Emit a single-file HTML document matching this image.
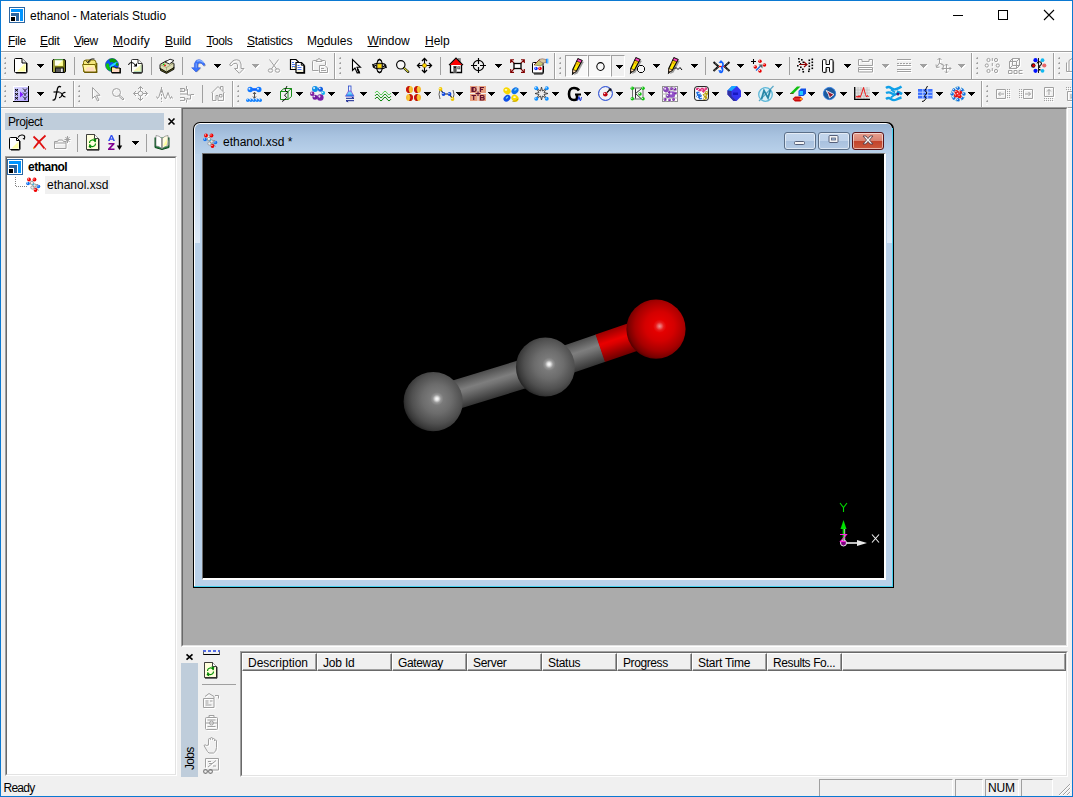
<!DOCTYPE html>
<html>
<head>
<meta charset="utf-8">
<title>ethanol - Materials Studio</title>
<style>
*{box-sizing:border-box;margin:0;padding:0}
html,body{width:1073px;height:797px;overflow:hidden;background:#f0f0f0}
body{position:relative;font-family:"Liberation Sans",sans-serif;font-size:12px;color:#000;line-height:1}
.a{position:absolute}
.t{position:absolute;white-space:nowrap;line-height:14px;height:14px}
.t u{text-decoration:underline;text-decoration-thickness:1px;text-underline-offset:1px;text-decoration-skip-ink:none}
svg{position:absolute;overflow:visible}
.sep{position:absolute;width:1px;background:#a0a0a0}
.band{position:absolute;width:2px;height:26px;border-left:1px solid #a0a0a0;border-right:1px solid #fff}
.dd{position:absolute;width:0;height:0;border-left:3.5px solid transparent;border-right:3.5px solid transparent;border-top:4px solid #000}
.dd.g{border-top-color:#a0a0a0}
.dd.w{border-top-color:#fff}
.chk{position:absolute;background:#f8f8f8;border-top:1px solid #a0a0a0;border-left:1px solid #a0a0a0;border-right:1px solid #fff;border-bottom:1px solid #fff}
.chk2{position:absolute;background:#f0f0f0;border-top:1px solid #a0a0a0;border-left:1px solid #a0a0a0;border-right:1px solid #fff;border-bottom:1px solid #fff}
.hd{position:absolute;background:#f0f0f0;border-top:1px solid #fff;border-left:1px solid #fff;border-right:1px solid #696969;border-bottom:1px solid #696969;box-shadow:inset -1px -1px 0 #a0a0a0}
.hd span{position:absolute;left:5px;top:2px;line-height:14px;white-space:nowrap}
.cb{position:absolute;top:132px;width:32px;height:18px;border-radius:3px;border:1px solid #5b6f88;box-shadow:inset 0 0 0 1px rgba(255,255,255,.55)}
</style>
</head>
<body>
<!-- window frame -->
<div class="a" style="left:0;top:0;width:1073px;height:797px;border:1px solid #0b79d2"></div>

<!-- title bar + menu background -->
<div class="a" style="left:1px;top:1px;width:1071px;height:50px;background:#fff"></div>
<svg style="left:9px;top:7px" width="16" height="16" viewBox="0 0 16 16" shape-rendering="crispEdges">
<rect x="0.5" y="0.5" width="15" height="15" fill="#fff" stroke="#2c65a0"/>
<path d="M2 2h12v12h-3v-9h-9z" fill="#0094ff"/>
<path d="M2 6h8v8h-3v-5h-5z" fill="#2c65a0"/>
<rect x="2" y="10" width="4" height="4" fill="#000"/>
</svg>
<div class="t" style="left:30px;top:9px">ethanol - Materials Studio</div>
<!-- caption buttons -->
<svg style="left:953px;top:10px" width="110" height="12" viewBox="0 0 110 12">
<path d="M0 5.5h10" stroke="#000" stroke-width="1" fill="none" shape-rendering="crispEdges"/>
<rect x="45.5" y="0.5" width="9" height="9" stroke="#000" fill="none" shape-rendering="crispEdges"/>
<path d="M91 0l10 10M101 0l-10 10" stroke="#000" stroke-width="1.1" fill="none"/>
</svg>

<!-- menu bar -->
<div id="menu">
<div class="t" style="left:8px;top:34px;letter-spacing:-.4px"><u>F</u>ile</div>
<div class="t" style="left:40px;top:34px;letter-spacing:-.3px"><u>E</u>dit</div>
<div class="t" style="left:74px;top:34px;letter-spacing:-.55px"><u>V</u>iew</div>
<div class="t" style="left:113px;top:34px;letter-spacing:.3px"><u>M</u>odify</div>
<div class="t" style="left:165px;top:34px;letter-spacing:-.1px"><u>B</u>uild</div>
<div class="t" style="left:206.5px;top:34px;letter-spacing:-.45px"><u>T</u>ools</div>
<div class="t" style="left:247px;top:34px;letter-spacing:-.25px"><u>S</u>tatistics</div>
<div class="t" style="left:307px;top:34px">M<u>o</u>dules</div>
<div class="t" style="left:367.5px;top:34px;letter-spacing:-.1px"><u>W</u>indow</div>
<div class="t" style="left:425px;top:34px"><u>H</u>elp</div>
</div>

<!-- toolbar area lines -->
<div class="a" style="left:1px;top:51px;width:1071px;height:1px;background:#a0a0a0"></div>
<div class="a" style="left:1px;top:52px;width:1071px;height:1px;background:#fff"></div>
<div class="a" style="left:1px;top:79px;width:1071px;height:1px;background:#a0a0a0"></div>
<div class="a" style="left:1px;top:80px;width:1071px;height:1px;background:#fff"></div>
<div class="a" style="left:1px;top:107px;width:1071px;height:1px;background:#a0a0a0"></div>
<div class="a" style="left:1px;top:108px;width:1071px;height:1px;background:#fff"></div>

<div id="tb1">
<svg style="left:4px;top:57px" width="3" height="22" viewBox="0 0 3 22" shape-rendering="crispEdges"><rect x="1" y="0" width="1" height="1" fill="#b2b2b2"/><rect x="0" y="1" width="1" height="1" fill="#b2b2b2"/><rect x="1" y="1" width="1" height="1" fill="#9c9c9c"/><rect x="0" y="0" width="1" height="1" fill="#e2e2e2"/><rect x="1" y="5" width="1" height="1" fill="#b2b2b2"/><rect x="0" y="6" width="1" height="1" fill="#b2b2b2"/><rect x="1" y="6" width="1" height="1" fill="#9c9c9c"/><rect x="0" y="5" width="1" height="1" fill="#e2e2e2"/><rect x="1" y="10" width="1" height="1" fill="#b2b2b2"/><rect x="0" y="11" width="1" height="1" fill="#b2b2b2"/><rect x="1" y="11" width="1" height="1" fill="#9c9c9c"/><rect x="0" y="10" width="1" height="1" fill="#e2e2e2"/><rect x="1" y="15" width="1" height="1" fill="#b2b2b2"/><rect x="0" y="16" width="1" height="1" fill="#b2b2b2"/><rect x="1" y="16" width="1" height="1" fill="#9c9c9c"/><rect x="0" y="15" width="1" height="1" fill="#e2e2e2"/><rect x="0" y="19" width="2" height="1" fill="#fafafa"/></svg>
<svg style="left:14px;top:58px" width="14" height="15" viewBox="0 0 14 15"><path d="M1.5 .5h6.5l4.5 4.5v8.5q0 1-1 1h-10q-1 0-1-1v-12q0-1 1-1z" fill="#fff" stroke="#000"/><path d="M3 13.5l8.5-8.5v8.5z" fill="#ffff8c" opacity=".75"/><path d="M8 .5v4.5h4.5" fill="#e8e8e8" stroke="#000"/><path d="M13 5v9q0 1-1 1h-10" fill="none" stroke="#000" stroke-width="1"/></svg>
<svg style="left:37px;top:64px" width="7" height="4" viewBox="0 0 7 4" shape-rendering="crispEdges"><path d="M0 0h7v1h-1v1h-1v1h-1v1h-1v-1h-1v-1h-1v-1h-1z" fill="#000"/></svg>
<svg style="left:52px;top:59px" width="14" height="14" viewBox="0 0 14 14"><rect x=".5" y=".5" width="13" height="13" rx="1.5" fill="#77771a" stroke="#000"/><rect x="1.5" y="1" width="1" height="12" fill="#c8c864"/><rect x="2.5" y=".5" width="8.5" height="6.5" fill="#fffff0" stroke="#8c8c28" stroke-width=".6"/><path d="M5 7l6-6v6z" fill="#ffff80" opacity=".8"/><rect x="2.5" y=".2" width="8.5" height="1" fill="#4aa04a"/><rect x="3" y="8.5" width="9" height="5" fill="#111"/><rect x="4" y="9.5" width="5" height="3.5" fill="#5a5a5a"/><rect x="9" y="9.5" width="1.8" height="3.5" fill="#e8e8e8"/></svg>
<div class="sep" style="left:74px;top:57px;height:18px"></div>
<svg style="left:82px;top:58px" width="16" height="15" viewBox="0 0 16 15"><path d="M1.5 4.5q0-2.5 2.5-2.5h7.5q2.5 0 2.5 2.5v9h-12.5z" fill="#f4e67c" stroke="#786800" stroke-width="1"/><path d="M.6 6.5h12.4l1.8 7.5h-12.6z" fill="#fff6a4" stroke="#786800" stroke-width="1"/><path d="M3 13.5l2-4.5h6.5l1.5 4.5z" fill="#ffd4c8" opacity=".75"/><path d="M14.7 5v9.3h-12.5" fill="none" stroke="#6a5a00" stroke-width="1.3"/><path d="M6.2 4q1.8-3.8 6.3-3" fill="none" stroke="#000" stroke-width=".85"/><path d="M4 2.5l2.2 2.6 2.5-2.4" fill="none" stroke="#000" stroke-width=".9"/></svg>
<svg style="left:105px;top:58px" width="16" height="15" viewBox="0 0 16 15"><circle cx="7" cy="7" r="6.5" fill="#0a50ff" stroke="#10308c" stroke-width=".6"/><path d="M4 1.5q3-1.8 6-.5l2 2.5-3 1.5-2-1-2 .5z" fill="#0c9a0c"/><path d="M1 6q2-1.5 3 0l.5 3 2 2-1 2q-3-.5-4.5-4z" fill="#10c010"/><path d="M4.5 8.5q3.5-4 8-4.5l.5 1.5q-4 1-7 5z" fill="#20d8ff"/><path d="M12 4l1.5 2.5-1.5 2-1.5-2z" fill="#0c9a0c"/><path d="M6.5 9h3l1 1h4.5v4.5h-8.5z" fill="#fff08c" stroke="#000" stroke-width=".9"/><path d="M7.5 14l1-3h6l-.5 3z" fill="#ffd8c8"/><path d="M15.3 10v4.8h-8.5" fill="none" stroke="#000" stroke-width="1.2"/></svg>
<svg style="left:128px;top:59px" width="15" height="14" viewBox="0 0 15 14"><path d="M4.5 .5h5.5l4 4v8q0 1-1 1h-8.5q-1 0-1-1v-11q0-1 1-1z" fill="#fff" stroke="#202020" stroke-width=".9"/><path d="M5 12.5l8.5-7.5v7.5z" fill="#f4f4a0" opacity=".8"/><path d="M13 6v6.5h-7" stroke="#b8e0c0" fill="none"/><path d="M10 .5v4h4" fill="#f4f4f4" stroke="#202020" stroke-width=".9"/><path d="M14.3 5.5v7.5q0 1.3-1.3 1.3h-8" fill="none" stroke="#000" stroke-width=".8"/><path d="M.5 6q.5-2.5 3-2.5 2.5 0 4 3" fill="none" stroke="#000" stroke-width="1"/><path d="M5.5 7.5h3.5v-3.5z" fill="#000"/></svg>
<div class="sep" style="left:151px;top:57px;height:18px"></div>
<svg style="left:159px;top:59px" width="16" height="14" viewBox="0 0 16 14"><path d="M1 5.5l6-3.5 8 2.5v4.5l-7.5 4.5-6.5-3.5z" fill="#dcdcb4" stroke="#000" stroke-width=".9"/><path d="M1 5.5l6.5 3 7.5-4.5" fill="none" stroke="#8c8c5c" stroke-width=".6"/><path d="M7.5 8.5v5" stroke="#8c8c5c" stroke-width=".6"/><path d="M6 3l5-2.8 4 1.3-4.5 3.5z" fill="#fff" stroke="#000" stroke-width=".8"/><path d="M1.5 9.5l6 3.5 7.5-4.5v1.8l-7.5 4.2-6-3z" fill="#5a5a1e" stroke="#000" stroke-width=".8"/><circle cx="4.8" cy="5.3" r=".9" fill="#00d000"/><circle cx="6" cy="6.3" r=".9" fill="#f00000"/></svg>
<div class="sep" style="left:182px;top:57px;height:18px"></div>
<svg style="left:190px;top:58px" width="16" height="15" viewBox="0 0 16 15"><g transform="translate(1.2,1) scale(.92)"><path d="M6.5 2.5q5.5-2.5 9.5 4.5l-1.5 1.5q-2-4-5.5-3.5l-1 1.5v3.5h3l-4.8 4.8-4.7-4.8h3v-4.5z" fill="#989898" opacity=".8"/><path d="M5.5 1.5q5.5-2.8 9.5 4.5l-1.5 1.3q-2-3.8-5.5-3l-1 1.7v3.5h3l-4.8 4.5-4.7-4.5h3v-4.5z" fill="#3a74ff" stroke="#2450d8" stroke-width=".6"/><path d="M6 2.5q4-2 7.5 1.5" fill="none" stroke="#8cb8ff" stroke-width="1.3"/><path d="M5.5 4.5v5" stroke="#78a4ff" stroke-width="1.2"/></g></svg>
<svg style="left:214px;top:64px" width="7" height="4" viewBox="0 0 7 4" shape-rendering="crispEdges"><path d="M0 0h7v1h-1v1h-1v1h-1v1h-1v-1h-1v-1h-1v-1h-1z" fill="#000"/></svg>
<svg style="left:229px;top:59px" width="16" height="15" viewBox="0 0 16 15"><g transform="translate(1,1)" stroke="#fff" fill="none"><path d="M10.5 1.5q-6-2.8-10 4.5l1.5 1q2.5-3.5 5.5-2.7l1 1.7v3.5h-3l4.8 4.8 4.7-4.8h-3v-4.5z"/></g><g stroke="#a0a0a0" fill="none"><path d="M10.5 1.5q-6-2.8-10 4.5l1.5 1q2.5-3.5 5.5-2.7l1 1.7v3.5h-3l4.8 4.8 4.7-4.8h-3v-4.5z"/></g></svg>
<svg style="left:252px;top:64px" width="8" height="5" viewBox="0 0 8 5" shape-rendering="crispEdges"><path d="M0 0h7v1h-1v1h-1v1h-1v1h-1v-1h-1v-1h-1v-1h-1z" fill="#fff" transform="translate(1,1)"/><path d="M0 0h7v1h-1v1h-1v1h-1v1h-1v-1h-1v-1h-1v-1h-1z" fill="#a0a0a0"/></svg>
<svg style="left:268px;top:59px" width="13" height="15" viewBox="0 0 13 15"><g transform="translate(1,1)" stroke="#fff" fill="none"><path d="M1.5 .5l7.5 10M10.5 .5l-7.5 10"/><ellipse cx="2.5" cy="11.5" rx="2.2" ry="1.8"/><ellipse cx="9.5" cy="11.5" rx="2.2" ry="1.8"/></g><g stroke="#a0a0a0" fill="none"><path d="M1.5 .5l7.5 10M10.5 .5l-7.5 10"/><ellipse cx="2.5" cy="11.5" rx="2.2" ry="1.8"/><ellipse cx="9.5" cy="11.5" rx="2.2" ry="1.8"/></g></svg>
<svg style="left:290px;top:59px" width="15" height="14" viewBox="0 0 15 14"><path d="M.5 .5h5.5l2.5 2.5v7.5h-8z" fill="#fff" stroke="#000" stroke-width="1.2"/><path d="M2 3.5h2M2 5.5h3M2 7.5h3" stroke="#4878f0" stroke-width="1"/><path d="M2 8.8h4" stroke="#c0b040" stroke-width=".8" stroke-dasharray="1 1"/><path d="M6 3.5h5.5l2.5 2.5v7.5h-8z" fill="#fff" stroke="#000" stroke-width="1.2"/><path d="M11.3 3.5v2.7h2.7" fill="none" stroke="#000" stroke-width="1"/><path d="M7.5 6.5h2M7.5 8.5h4M7.5 10.5h4" stroke="#4878f0" stroke-width="1"/><path d="M7.5 12h5" stroke="#c0b040" stroke-width=".8" stroke-dasharray="1 1"/><path d="M14.5 6.5v7.5h-8" fill="none" stroke="#000" stroke-width="1.3"/></svg>
<svg style="left:312px;top:58px" width="17" height="16" viewBox="0 0 17 16"><g transform="translate(1,1)" stroke="#fff" fill="none"><path d="M4.5 2.5h-3q-1 0-1 1v9h6"/><path d="M9.5 2.5h3q1 0 1 1v3.5"/><path d="M4 3.5v-1.5h1.5q.5-1.5 1.5-1.5t1.5 1.5h1.5v1.5z"/><path d="M7.5 7.5h5.5l2.5 2.5v4.5h-8z"/><path d="M9 10.5h3M9 12.5h5"/></g><g stroke="#a0a0a0" fill="none"><path d="M4.5 2.5h-3q-1 0-1 1v9h6"/><path d="M9.5 2.5h3q1 0 1 1v3.5"/><path d="M4 3.5v-1.5h1.5q.5-1.5 1.5-1.5t1.5 1.5h1.5v1.5z"/><path d="M7.5 7.5h5.5l2.5 2.5v4.5h-8z"/><path d="M9 10.5h3M9 12.5h5"/></g></svg>
<div class="band" style="left:334px;top:53px"></div>
<svg style="left:339px;top:57px" width="3" height="22" viewBox="0 0 3 22" shape-rendering="crispEdges"><rect x="1" y="0" width="1" height="1" fill="#b2b2b2"/><rect x="0" y="1" width="1" height="1" fill="#b2b2b2"/><rect x="1" y="1" width="1" height="1" fill="#9c9c9c"/><rect x="0" y="0" width="1" height="1" fill="#e2e2e2"/><rect x="1" y="5" width="1" height="1" fill="#b2b2b2"/><rect x="0" y="6" width="1" height="1" fill="#b2b2b2"/><rect x="1" y="6" width="1" height="1" fill="#9c9c9c"/><rect x="0" y="5" width="1" height="1" fill="#e2e2e2"/><rect x="1" y="10" width="1" height="1" fill="#b2b2b2"/><rect x="0" y="11" width="1" height="1" fill="#b2b2b2"/><rect x="1" y="11" width="1" height="1" fill="#9c9c9c"/><rect x="0" y="10" width="1" height="1" fill="#e2e2e2"/><rect x="1" y="15" width="1" height="1" fill="#b2b2b2"/><rect x="0" y="16" width="1" height="1" fill="#b2b2b2"/><rect x="1" y="16" width="1" height="1" fill="#9c9c9c"/><rect x="0" y="15" width="1" height="1" fill="#e2e2e2"/><rect x="0" y="19" width="2" height="1" fill="#fafafa"/></svg>
<svg style="left:352px;top:59px" width="10" height="15" viewBox="0 0 10 15"><path d="M.5 .5v11l2.5-2.5 2.2 5 2-.8-2.2-4.9h3.5z" fill="#fff" stroke="#000" stroke-width="1.1"/><path d="M5.5 10l2 4.5" stroke="#000" stroke-width="1.8"/></svg>
<svg style="left:372px;top:59px" width="15" height="14" viewBox="0 0 15 14"><ellipse cx="7.5" cy="7" rx="6.5" ry="2.8" fill="none" stroke="#000" stroke-width="1.1"/><ellipse cx="7.5" cy="7" rx="2.8" ry="6.3" fill="none" stroke="#000" stroke-width="1.1"/><path d="M.5 5l1.5 2.5 2-1.5M14.5 9l-1.5-2.5-2 1.5M5.5 1.5l2-1.2 2 1.5M9.5 12.5l-2 1.2-2-1.5" fill="none" stroke="#000" stroke-width="1.2"/><rect x="5.5" y="5" width="4" height="4" fill="#ffe000" stroke="#806000" stroke-width=".5"/></svg>
<svg style="left:396px;top:60px" width="13" height="13" viewBox="0 0 13 13"><circle cx="4.8" cy="4.8" r="4.2" fill="#f8f8f8" stroke="#000" stroke-width="1.15"/><path d="M8 8l4.2 3.8" stroke="#000" stroke-width="2.3" stroke-linecap="round"/><path d="M8.2 8.2l3.8 3.4" stroke="#f0f040" stroke-width="1.1" stroke-linecap="round"/></svg>
<svg style="left:417px;top:58px" width="15" height="15" viewBox="0 0 15 15"><path d="M7.5 .5v14M.5 7.5h14" stroke="#000" stroke-width="1.1"/><path d="M5 3l2.5-2.5 2.5 2.5M5 12l2.5 2.5 2.5-2.5M3 5l-2.5 2.5 2.5 2.5M12 5l2.5 2.5-2.5 2.5" stroke="#000" stroke-width="1.3" fill="none"/><circle cx="7.5" cy="7.5" r="2.1" fill="#ffd800" stroke="#705000" stroke-width=".6"/></svg>
<div class="sep" style="left:440px;top:57px;height:18px"></div>
<svg style="left:449px;top:58px" width="14" height="15" viewBox="0 0 14 15"><rect x="9" y=".5" width="2.5" height="4" fill="#909090" stroke="#707070" stroke-width=".5"/><path d="M1.5 7h11v7.5h-11z" fill="#fff"/><path d="M.5 7l6.5-6.5 6.5 6.5z" fill="#f00" /><path d="M0 7.2l7-7 7 7" fill="none" stroke="#000" stroke-width="1.2"/><path d="M1.5 7v7.5h3.5v-5.5h2v5.5h5.5v-7.5" fill="none" stroke="#000" stroke-width="1.3"/><path d="M4.5 9v5.5M7.5 9v5.5" stroke="#909090" stroke-width="1"/><rect x="8.8" y="8.8" width="2" height="2" fill="#ddd" stroke="#555" stroke-width=".9"/></svg>
<svg style="left:471px;top:58px" width="15" height="15" viewBox="0 0 15 15"><circle cx="7.5" cy="7.5" r="5.2" fill="none" stroke="#000" stroke-width="1.15"/><path d="M7.5 0v6M7.5 9v6M0 7.5h6M9 7.5h6" stroke="#000" stroke-width="1.15"/></svg>
<svg style="left:495px;top:64px" width="7" height="4" viewBox="0 0 7 4" shape-rendering="crispEdges"><path d="M0 0h7v1h-1v1h-1v1h-1v1h-1v-1h-1v-1h-1v-1h-1z" fill="#000"/></svg>
<svg style="left:510px;top:59px" width="15" height="14" viewBox="0 0 15 14"><path d="M.7 4v-3.3h3.3M.7 .7l3.6 3.6M14.3 4v-3.3h-3.3M14.3 .7l-3.6 3.6M.7 10v3.3h3.3M.7 13.3l3.6-3.6M14.3 10v3.3h-3.3M14.3 13.3l-3.6-3.6" fill="none" stroke="#800000" stroke-width="1.15"/><rect x="4" y="4.5" width="7" height="5" fill="#fff" stroke="#000" stroke-width="1.3"/></svg>
<svg style="left:532px;top:58px" width="17" height="16" viewBox="0 0 17 16"><path d="M1.5 4.5h9.5v9.5q0 1-1 1h-8.5q-1 0-1-1v-8.5q0-1 1-1z" fill="#fff" stroke="#000"/><path d="M11.5 8v6.5q0 1.5-1.5 1.5h-8" fill="none" stroke="#000"/><circle cx="4" cy="10.5" r="1.8" fill="#1030ff"/><circle cx="8" cy="10.5" r="1.8" fill="#f00010"/><circle cx="3.5" cy="10" r=".6" fill="#fff"/><circle cx="7.5" cy="10" r=".6" fill="#fff"/><path d="M2 7l5.5-5.5 4 3-2.5 3.5z" fill="#c8c870" stroke="#505020" stroke-width=".5"/><path d="M7 1.5q3-1.5 7 0v3q-3 1-5.5-.5z" fill="#d8c8a0" stroke="#806060" stroke-width=".6"/><rect x="14" y=".8" width="2.2" height="4.5" fill="#2080ff"/><rect x="15.2" y=".8" width="1" height="4.5" fill="#60d0ff"/><path d="M2 7l5.5-5.5" stroke="#802020" stroke-width=".8"/></svg>
<div class="band" style="left:554px;top:53px"></div>
<svg style="left:559px;top:57px" width="3" height="22" viewBox="0 0 3 22" shape-rendering="crispEdges"><rect x="1" y="0" width="1" height="1" fill="#b2b2b2"/><rect x="0" y="1" width="1" height="1" fill="#b2b2b2"/><rect x="1" y="1" width="1" height="1" fill="#9c9c9c"/><rect x="0" y="0" width="1" height="1" fill="#e2e2e2"/><rect x="1" y="5" width="1" height="1" fill="#b2b2b2"/><rect x="0" y="6" width="1" height="1" fill="#b2b2b2"/><rect x="1" y="6" width="1" height="1" fill="#9c9c9c"/><rect x="0" y="5" width="1" height="1" fill="#e2e2e2"/><rect x="1" y="10" width="1" height="1" fill="#b2b2b2"/><rect x="0" y="11" width="1" height="1" fill="#b2b2b2"/><rect x="1" y="11" width="1" height="1" fill="#9c9c9c"/><rect x="0" y="10" width="1" height="1" fill="#e2e2e2"/><rect x="1" y="15" width="1" height="1" fill="#b2b2b2"/><rect x="0" y="16" width="1" height="1" fill="#b2b2b2"/><rect x="1" y="16" width="1" height="1" fill="#9c9c9c"/><rect x="0" y="15" width="1" height="1" fill="#e2e2e2"/><rect x="0" y="19" width="2" height="1" fill="#fafafa"/></svg>
<div class="chk" style="left:565px;top:55px;width:23px;height:22px"></div>
<div class="chk" style="left:588px;top:55px;width:23px;height:22px"></div>
<div class="chk2" style="left:611px;top:55px;width:14px;height:22px"></div>
<svg style="left:572px;top:58px" width="12" height="17" viewBox="0 0 12 17"><g transform="translate(0,0)"><path d="M8 2l3.8 2-6.3 11.5-3.5 1.5z" fill="#909090" opacity=".9"/><path d="M6 .8l4 1.7-5.5 10.5-4 3 .3-4.5z" fill="#ffe800" stroke="#000" stroke-width="1.1"/><path d="M3.5 6.5l1-2 1 2.5 1-3" fill="none" stroke="#e09000" stroke-width=".8"/><path d="M6 .8l4 1.7-1.2 2.3-4-1.7z" fill="#ff48c0" stroke="#000" stroke-width=".6"/><path d="M.8 11.5l3.7 1.5-4 3z" fill="#ffd8b0" stroke="#000" stroke-width=".6"/><path d="M.5 15.5l.1-1.8 1.400.8z" fill="#000"/></g></svg>
<svg style="left:596px;top:62px" width="9" height="9" viewBox="0 0 9 9"><ellipse cx="4.5" cy="4.5" rx="3.7" ry="3.9" fill="none" stroke="#000" stroke-width="1.05"/></svg>
<svg style="left:616px;top:65px" width="7" height="4" viewBox="0 0 7 4" shape-rendering="crispEdges"><path d="M0 0h7v1h-1v1h-1v1h-1v1h-1v-1h-1v-1h-1v-1h-1z" fill="#000"/></svg>
<svg style="left:630px;top:57px" width="16" height="17" viewBox="0 0 16 17"><g transform="translate(0,0)"><path d="M8 2l3.8 2-6.3 11.5-3.5 1.5z" fill="#909090" opacity=".9"/><path d="M6 .8l4 1.7-5.5 10.5-4 3 .3-4.5z" fill="#ffe800" stroke="#000" stroke-width="1.1"/><path d="M3.5 6.5l1-2 1 2.5 1-3" fill="none" stroke="#e09000" stroke-width=".8"/><path d="M6 .8l4 1.7-1.2 2.3-4-1.7z" fill="#ff48c0" stroke="#000" stroke-width=".6"/><path d="M.8 11.5l3.7 1.5-4 3z" fill="#ffd8b0" stroke="#000" stroke-width=".6"/><path d="M.5 15.5l.1-1.8 1.400.8z" fill="#000"/></g><path d="M9.5 8.5h3l2 2v3l-2 2h-3l-2-2v-3z" fill="#f4f4f4" stroke="#000" stroke-width="1"/></svg>
<svg style="left:653px;top:64px" width="7" height="4" viewBox="0 0 7 4" shape-rendering="crispEdges"><path d="M0 0h7v1h-1v1h-1v1h-1v1h-1v-1h-1v-1h-1v-1h-1z" fill="#000"/></svg>
<svg style="left:668px;top:57px" width="16" height="17" viewBox="0 0 16 17"><g transform="translate(0,0)"><path d="M8 2l3.8 2-6.3 11.5-3.5 1.5z" fill="#909090" opacity=".9"/><path d="M6 .8l4 1.7-5.5 10.5-4 3 .3-4.5z" fill="#ffe800" stroke="#000" stroke-width="1.1"/><path d="M3.5 6.5l1-2 1 2.5 1-3" fill="none" stroke="#e09000" stroke-width=".8"/><path d="M6 .8l4 1.7-1.2 2.3-4-1.7z" fill="#ff48c0" stroke="#000" stroke-width=".6"/><path d="M.8 11.5l3.7 1.5-4 3z" fill="#ffd8b0" stroke="#000" stroke-width=".6"/><path d="M.5 15.5l.1-1.8 1.400.8z" fill="#000"/></g><path d="M6.5 12l1.5-1.5 2 2 2-2 2 2.5" fill="none" stroke="#000" stroke-width="1"/></svg>
<svg style="left:691px;top:64px" width="7" height="4" viewBox="0 0 7 4" shape-rendering="crispEdges"><path d="M0 0h7v1h-1v1h-1v1h-1v1h-1v-1h-1v-1h-1v-1h-1z" fill="#000"/></svg>
<div class="sep" style="left:705px;top:57px;height:18px"></div>
<svg style="left:713px;top:60px" width="17" height="13" viewBox="0 0 17 13"><path d="M.5 2l5 4.5-5 4.5M16.5 2l-5 4.5 5 4.5" fill="none" stroke="#000" stroke-width="1.9"/><path d="M.5 2l5 4.5-5 4.5M16.5 2l-5 4.5 5 4.5" fill="none" stroke="#fff" stroke-width=".6" stroke-dasharray="1 1"/><path d="M6 6.5h5.5" stroke="#f00" stroke-width="1.2"/><path d="M7 2.5q3-1 3 2t-2 3q2 .5 1.5 3t-3 1.5" fill="none" stroke="#1060ff" stroke-width="1.7"/><path d="M5.5 3l2.5-3 2 2.5zM5 10.5l2.5 2.5 .5-3z" fill="#1060ff"/></svg>
<svg style="left:737px;top:64px" width="7" height="4" viewBox="0 0 7 4" shape-rendering="crispEdges"><path d="M0 0h7v1h-1v1h-1v1h-1v1h-1v-1h-1v-1h-1v-1h-1z" fill="#000"/></svg>
<svg style="left:751px;top:59px" width="16" height="14" viewBox="0 0 16 14"><path d="M2.5 0v5M0 2.5h5" stroke="#000" stroke-width="1.05"/><circle cx="9" cy="2.3" r="1.75" fill="#e80000"/><circle cx="8.475" cy="1.775" r="0.6124999999999999" fill="#fff" opacity=".85"/><circle cx="13.5" cy="6" r="1.75" fill="#e80000"/><circle cx="12.975" cy="5.475" r="0.6124999999999999" fill="#fff" opacity=".85"/><circle cx="4.3" cy="8" r="1.75" fill="#e80000"/><circle cx="3.775" cy="7.475" r="0.6124999999999999" fill="#fff" opacity=".85"/><circle cx="9" cy="12" r="1.75" fill="#e80000"/><circle cx="8.475" cy="11.475" r="0.6124999999999999" fill="#fff" opacity=".85"/><path d="M5 11.5l5-5" stroke="#1868e0" stroke-width="1.3"/><path d="M7.5 5.5h4v4z" fill="#606060"/></svg>
<svg style="left:775px;top:64px" width="7" height="4" viewBox="0 0 7 4" shape-rendering="crispEdges"><path d="M0 0h7v1h-1v1h-1v1h-1v1h-1v-1h-1v-1h-1v-1h-1z" fill="#000"/></svg>
<div class="sep" style="left:789px;top:57px;height:18px"></div>
<svg style="left:797px;top:58px" width="17" height="15" viewBox="0 0 17 15"><g fill="#000"><rect x="1" y="0" width="1.6" height="1.6"/><rect x="4" y="1" width="1.6" height="1.6"/><rect x="1.5" y="3" width="1.6" height="1.6"/><rect x="5.5" y="3.5" width="1.6" height="1.6"/><rect x="0" y="7" width="1.6" height="1.6"/><rect x="3" y="8.5" width="1.6" height="1.6"/><rect x="1.5" y="11" width="1.6" height="1.6"/><rect x="5" y="10.5" width="1.6" height="1.6"/><rect x="5.5" y="13" width="1.6" height="1.6"/><rect x="3" y="5" width="1.2" height="1.2"/><rect x="11.5" y="1.5" width="1.6" height="1.6"/><rect x="14.5" y=".5" width="1.6" height="1.6"/><rect x="11.5" y="4.5" width="1.6" height="1.6"/><rect x="14.5" y="3.5" width="1.6" height="1.6"/><rect x="11.5" y="7.5" width="1.6" height="1.6"/><rect x="14.5" y="6.5" width="1.6" height="1.6"/><rect x="11.5" y="10.5" width="1.6" height="1.6"/><rect x="14.5" y="9.5" width="1.6" height="1.6"/><rect x="11" y="12.5" width="1.6" height="1.6"/></g><path d="M2 6.5h7.5M7 4l3 2.5-3 2.5" fill="none" stroke="#900000" stroke-width="1.1"/></svg>
<svg style="left:822px;top:59px" width="12" height="14" viewBox="0 0 12 14"><path d="M1.5 .6h1.5q1 0 1 1v3.9h3.5v-3.9q0-1 1-1h1.5q1 0 1 1v10.8q0 1-1 1h-1.5q-1 0-1-1v-3.9h-3.5v3.9q0 1-1 1h-1.5q-1 0-1-1v-10.8q0-1 1-1z" fill="#fff" stroke="#000" stroke-width=".95"/><path d="M11.6 2.5v10q0 1.1-1.1 1.1h-1.5M4.6 9.5v3q0 1.1-1.1 1.1h-1.5" fill="none" stroke="#000" stroke-width=".6"/></svg>
<svg style="left:844px;top:64px" width="7" height="4" viewBox="0 0 7 4" shape-rendering="crispEdges"><path d="M0 0h7v1h-1v1h-1v1h-1v1h-1v-1h-1v-1h-1v-1h-1z" fill="#000"/></svg>
<svg style="left:858px;top:59px" width="16" height="14" viewBox="0 0 16 14"><g transform="translate(1,1)" stroke="#fff" fill="none"><path d="M.5 6.5v-6h3.5v2h7v-2h3.5v6z"/><path d="M.5 8.5h14v4.5h-14zM.5 10.5h14"/></g><g stroke="#a0a0a0" fill="none"><path d="M.5 6.5v-6h3.5v2h7v-2h3.5v6z"/><path d="M.5 8.5h14v4.5h-14zM.5 10.5h14"/></g></svg>
<svg style="left:882px;top:64px" width="8" height="5" viewBox="0 0 8 5" shape-rendering="crispEdges"><path d="M0 0h7v1h-1v1h-1v1h-1v1h-1v-1h-1v-1h-1v-1h-1z" fill="#fff" transform="translate(1,1)"/><path d="M0 0h7v1h-1v1h-1v1h-1v1h-1v-1h-1v-1h-1v-1h-1z" fill="#a0a0a0"/></svg>
<svg style="left:897px;top:59px" width="15" height="14" viewBox="0 0 15 14"><g transform="translate(1,1)" stroke="#fff" fill="none"><path d="M0 .5h14M0 6.5h14M0 10.5h14M0 12.5h14"/><path d="M0 4.5h14" stroke-dasharray="2 1"/></g><g stroke="#a0a0a0" fill="none"><path d="M0 .5h14M0 6.5h14M0 10.5h14M0 12.5h14"/><path d="M0 4.5h14" stroke-dasharray="2 1"/></g></svg>
<svg style="left:920px;top:64px" width="8" height="5" viewBox="0 0 8 5" shape-rendering="crispEdges"><path d="M0 0h7v1h-1v1h-1v1h-1v1h-1v-1h-1v-1h-1v-1h-1z" fill="#fff" transform="translate(1,1)"/><path d="M0 0h7v1h-1v1h-1v1h-1v1h-1v-1h-1v-1h-1v-1h-1z" fill="#a0a0a0"/></svg>
<svg style="left:935px;top:58px" width="16" height="16" viewBox="0 0 16 16"><g transform="translate(1,1)" stroke="#fff" fill="none"><path d="M4.5 0v5M2.5 2l2-2 2 2M4.5 5l-3 4M4.5 5l4 2.5M1 6.5l.5 3 3-.5M6.5 5.5l2.5 2-1 1.5"/><path d="M11.5 6v9M7 10.5h9M11.5 6l-1.5 1.5M11.5 6l1.5 1.5M11.5 15l-1.5-1.5M11.5 15l1.5-1.5M7 10.5l1.5-1.5M7 10.5l1.5 1.5M16 10.5l-1.5-1.5M16 10.5l-1.5 1.5"/></g><g stroke="#a0a0a0" fill="none"><path d="M4.5 0v5M2.5 2l2-2 2 2M4.5 5l-3 4M4.5 5l4 2.5M1 6.5l.5 3 3-.5M6.5 5.5l2.5 2-1 1.5"/><path d="M11.5 6v9M7 10.5h9M11.5 6l-1.5 1.5M11.5 6l1.5 1.5M11.5 15l-1.5-1.5M11.5 15l1.5-1.5M7 10.5l1.5-1.5M7 10.5l1.5 1.5M16 10.5l-1.5-1.5M16 10.5l-1.5 1.5"/></g></svg>
<svg style="left:958px;top:64px" width="8" height="5" viewBox="0 0 8 5" shape-rendering="crispEdges"><path d="M0 0h7v1h-1v1h-1v1h-1v1h-1v-1h-1v-1h-1v-1h-1z" fill="#fff" transform="translate(1,1)"/><path d="M0 0h7v1h-1v1h-1v1h-1v1h-1v-1h-1v-1h-1v-1h-1z" fill="#a0a0a0"/></svg>
<div class="band" style="left:971px;top:53px"></div>
<svg style="left:976px;top:57px" width="3" height="22" viewBox="0 0 3 22" shape-rendering="crispEdges"><rect x="1" y="0" width="1" height="1" fill="#b2b2b2"/><rect x="0" y="1" width="1" height="1" fill="#b2b2b2"/><rect x="1" y="1" width="1" height="1" fill="#9c9c9c"/><rect x="0" y="0" width="1" height="1" fill="#e2e2e2"/><rect x="1" y="5" width="1" height="1" fill="#b2b2b2"/><rect x="0" y="6" width="1" height="1" fill="#b2b2b2"/><rect x="1" y="6" width="1" height="1" fill="#9c9c9c"/><rect x="0" y="5" width="1" height="1" fill="#e2e2e2"/><rect x="1" y="10" width="1" height="1" fill="#b2b2b2"/><rect x="0" y="11" width="1" height="1" fill="#b2b2b2"/><rect x="1" y="11" width="1" height="1" fill="#9c9c9c"/><rect x="0" y="10" width="1" height="1" fill="#e2e2e2"/><rect x="1" y="15" width="1" height="1" fill="#b2b2b2"/><rect x="0" y="16" width="1" height="1" fill="#b2b2b2"/><rect x="1" y="16" width="1" height="1" fill="#9c9c9c"/><rect x="0" y="15" width="1" height="1" fill="#e2e2e2"/><rect x="0" y="19" width="2" height="1" fill="#fafafa"/></svg>
<svg style="left:985px;top:58px" width="15" height="15" viewBox="0 0 15 15"><g transform="translate(1,1)" stroke="#fff" fill="none"><circle cx="3.5" cy="2" r="1.6"/><circle cx="11" cy="2" r="1.6"/><circle cx="1.8" cy="7.5" r="1.6"/><circle cx="12.8" cy="7.5" r="1.6"/><circle cx="3.5" cy="13" r="1.6"/><circle cx="11" cy="13" r="1.6"/><path d="M7.3 0v15" stroke-dasharray="3 2"/></g><g stroke="#a0a0a0" fill="none"><circle cx="3.5" cy="2" r="1.6"/><circle cx="11" cy="2" r="1.6"/><circle cx="1.8" cy="7.5" r="1.6"/><circle cx="12.8" cy="7.5" r="1.6"/><circle cx="3.5" cy="13" r="1.6"/><circle cx="11" cy="13" r="1.6"/><path d="M7.3 0v15" stroke-dasharray="3 2"/></g></svg>
<svg style="left:1008px;top:58px" width="15" height="16" viewBox="0 0 15 16"><g transform="translate(1,1)" stroke="#fff" fill="none"><path d="M1.5 3.5h7v7h-7zM4.5 .5h7v7h-7zM1.5 3.5l3-3M8.5 3.5l3-3M1.5 10.5l3-3M8.5 10.5l3-3"/><path d="M.5 12.5h3.5v3h-3.5zM6 12.5v3h3v-3zM14.5 12.5h-3.5v3h3.5"/></g><g stroke="#a0a0a0" fill="none"><path d="M1.5 3.5h7v7h-7zM4.5 .5h7v7h-7zM1.5 3.5l3-3M8.5 3.5l3-3M1.5 10.5l3-3M8.5 10.5l3-3"/><path d="M.5 12.5h3.5v3h-3.5zM6 12.5v3h3v-3zM14.5 12.5h-3.5v3h3.5"/></g></svg>
<svg style="left:1031px;top:58px" width="15" height="15" viewBox="0 0 15 15"><circle cx="4.5" cy="2.2" r="2.1" fill="#0010ff"/><circle cx="11.5" cy="2.2" r="1.9" fill="#10b8f0"/><circle cx="2.3" cy="7.5" r="2.2" fill="#000"/><circle cx="2.6" cy="7.5" r="1.5" fill="#e00000"/><circle cx="13.3" cy="7.5" r="2.1" fill="#e86868"/><circle cx="4.5" cy="12.8" r="2.1" fill="#0010ff"/><circle cx="11.5" cy="12.8" r="1.9" fill="#10b8f0"/><path d="M7.5 0v15" stroke="#000" stroke-width=".9"/><path d="M6 5.5q.3-1.8 2.3-1.7t2.2 1.7q0 1.3-1.8 2.3v2.2" fill="none" stroke="#000" stroke-width="1.05"/><rect x="8" y="11" width="1.5" height="1.5" fill="#000"/></svg>
<div class="band" style="left:1053px;top:53px"></div>
<svg style="left:1058px;top:57px" width="3" height="22" viewBox="0 0 3 22" shape-rendering="crispEdges"><rect x="1" y="0" width="1" height="1" fill="#b2b2b2"/><rect x="0" y="1" width="1" height="1" fill="#b2b2b2"/><rect x="1" y="1" width="1" height="1" fill="#9c9c9c"/><rect x="0" y="0" width="1" height="1" fill="#e2e2e2"/><rect x="1" y="5" width="1" height="1" fill="#b2b2b2"/><rect x="0" y="6" width="1" height="1" fill="#b2b2b2"/><rect x="1" y="6" width="1" height="1" fill="#9c9c9c"/><rect x="0" y="5" width="1" height="1" fill="#e2e2e2"/><rect x="1" y="10" width="1" height="1" fill="#b2b2b2"/><rect x="0" y="11" width="1" height="1" fill="#b2b2b2"/><rect x="1" y="11" width="1" height="1" fill="#9c9c9c"/><rect x="0" y="10" width="1" height="1" fill="#e2e2e2"/><rect x="1" y="15" width="1" height="1" fill="#b2b2b2"/><rect x="0" y="16" width="1" height="1" fill="#b2b2b2"/><rect x="1" y="16" width="1" height="1" fill="#9c9c9c"/><rect x="0" y="15" width="1" height="1" fill="#e2e2e2"/><rect x="0" y="19" width="2" height="1" fill="#fafafa"/></svg>
<svg style="left:1066px;top:58px" width="6" height="15" viewBox="0 0 6 15"><g transform="translate(1,1)" stroke="#fff" fill="none"><path d="M6 .5l-3 2v11h3M.5 4.5v9h2.5"/></g><g stroke="#a0a0a0" fill="none"><path d="M6 .5l-3 2v11h3M.5 4.5v9h2.5"/></g></svg>
</div>
<div id="tb2">
<svg style="left:4px;top:85px" width="3" height="22" viewBox="0 0 3 22" shape-rendering="crispEdges"><rect x="1" y="0" width="1" height="1" fill="#b2b2b2"/><rect x="0" y="1" width="1" height="1" fill="#b2b2b2"/><rect x="1" y="1" width="1" height="1" fill="#9c9c9c"/><rect x="0" y="0" width="1" height="1" fill="#e2e2e2"/><rect x="1" y="5" width="1" height="1" fill="#b2b2b2"/><rect x="0" y="6" width="1" height="1" fill="#b2b2b2"/><rect x="1" y="6" width="1" height="1" fill="#9c9c9c"/><rect x="0" y="5" width="1" height="1" fill="#e2e2e2"/><rect x="1" y="10" width="1" height="1" fill="#b2b2b2"/><rect x="0" y="11" width="1" height="1" fill="#b2b2b2"/><rect x="1" y="11" width="1" height="1" fill="#9c9c9c"/><rect x="0" y="10" width="1" height="1" fill="#e2e2e2"/><rect x="1" y="15" width="1" height="1" fill="#b2b2b2"/><rect x="0" y="16" width="1" height="1" fill="#b2b2b2"/><rect x="1" y="16" width="1" height="1" fill="#9c9c9c"/><rect x="0" y="15" width="1" height="1" fill="#e2e2e2"/><rect x="0" y="19" width="2" height="1" fill="#fafafa"/></svg>
<svg style="left:13px;top:86px" width="16" height="16" viewBox="0 0 16 16"><defs><linearGradient id="gxy" x1="0" y1="0" x2="1" y2="1"><stop offset="0" stop-color="#dcdcff"/><stop offset="1" stop-color="#b0a0ff"/></linearGradient></defs><rect x="0" y="0" width="16" height="16" fill="#000"/><rect x="0" y="0" width="15" height="15" fill="#fff"/><rect x="1" y="1" width="14" height="14" fill="url(#gxy)"/><g stroke="#000" stroke-width="1" fill="none"><path d="M2 3l3 2.5M5 3l-3 2.5M2 7l3 2.5M5 7l-3 2.5M2 11l3 2.5M5 11l-3 2.5"/><path d="M10 2.5l2 2 2-2M12 4.5v1.5M10 6.5l2 2 2-2M12 8.5v1.5M10 10.5l2 2 2-2M12 12.5v1.5" stroke-width=".9"/></g><path d="M7 5.5l3.5 3-3.5 3z" fill="#8020ff"/></svg>
<svg style="left:37px;top:92px" width="7" height="4" viewBox="0 0 7 4" shape-rendering="crispEdges"><path d="M0 0h7v1h-1v1h-1v1h-1v1h-1v-1h-1v-1h-1v-1h-1z" fill="#000"/></svg>
<svg style="left:52px;top:86px" width="15" height="15" viewBox="0 0 15 15"><path d="M9 1q-2.5-1.5-3.5 1.5l-2 9.5q-.6 2.5-3 2" fill="none" stroke="#000" stroke-width="1.25"/><path d="M1.5 6h6" stroke="#000" stroke-width="1.2"/><path d="M7.5 7q1.5-1 2.5 1.5t3.5 2.5M13.5 6.5q-2.5-.5-3.5 2.5t-3 2.5" fill="none" stroke="#000" stroke-width="1.15"/></svg>
<div class="band" style="left:73px;top:81px"></div>
<svg style="left:78px;top:85px" width="3" height="22" viewBox="0 0 3 22" shape-rendering="crispEdges"><rect x="1" y="0" width="1" height="1" fill="#b2b2b2"/><rect x="0" y="1" width="1" height="1" fill="#b2b2b2"/><rect x="1" y="1" width="1" height="1" fill="#9c9c9c"/><rect x="0" y="0" width="1" height="1" fill="#e2e2e2"/><rect x="1" y="5" width="1" height="1" fill="#b2b2b2"/><rect x="0" y="6" width="1" height="1" fill="#b2b2b2"/><rect x="1" y="6" width="1" height="1" fill="#9c9c9c"/><rect x="0" y="5" width="1" height="1" fill="#e2e2e2"/><rect x="1" y="10" width="1" height="1" fill="#b2b2b2"/><rect x="0" y="11" width="1" height="1" fill="#b2b2b2"/><rect x="1" y="11" width="1" height="1" fill="#9c9c9c"/><rect x="0" y="10" width="1" height="1" fill="#e2e2e2"/><rect x="1" y="15" width="1" height="1" fill="#b2b2b2"/><rect x="0" y="16" width="1" height="1" fill="#b2b2b2"/><rect x="1" y="16" width="1" height="1" fill="#9c9c9c"/><rect x="0" y="15" width="1" height="1" fill="#e2e2e2"/><rect x="0" y="19" width="2" height="1" fill="#fafafa"/></svg>
<svg style="left:92px;top:87px" width="10" height="15" viewBox="0 0 10 15"><g transform="translate(1,1)" stroke="#fff" fill="none"><path d="M.5 .5v11l2.5-2.5 2.5 5 1.5-.8-2.5-4.9h3.5z"/></g><g stroke="#a0a0a0" fill="none"><path d="M.5 .5v11l2.5-2.5 2.5 5 1.5-.8-2.5-4.9h3.5z"/></g></svg>
<svg style="left:112px;top:88px" width="13" height="13" viewBox="0 0 13 13"><g transform="translate(1,1)" stroke="#fff" fill="none"><circle cx="4.5" cy="4.5" r="4"/><path d="M7.5 7l4.5 4-1 1-4.5-4"/></g><g stroke="#a0a0a0" fill="none"><circle cx="4.5" cy="4.5" r="4"/><path d="M7.5 7l4.5 4-1 1-4.5-4"/></g></svg>
<svg style="left:133px;top:86px" width="15" height="15" viewBox="0 0 15 15"><g transform="translate(1,1)" stroke="#fff" fill="none"><path d="M7.5 .5v4.5M7.5 10v4.5M.5 7.5h4.5M10 7.5h4.5M7.5 .5l-2.5 2.5M7.5 .5l2.5 2.5M7.5 14.5l-2.5-2.5M7.5 14.5l2.5-2.5M.5 7.5l2.5-2.5M.5 7.5l2.5 2.5M14.5 7.5l-2.5-2.5M14.5 7.5l-2.5 2.5"/><circle cx="7.5" cy="7.5" r="2.3"/></g><g stroke="#a0a0a0" fill="none"><path d="M7.5 .5v4.5M7.5 10v4.5M.5 7.5h4.5M10 7.5h4.5M7.5 .5l-2.5 2.5M7.5 .5l2.5 2.5M7.5 14.5l-2.5-2.5M7.5 14.5l2.5-2.5M.5 7.5l2.5-2.5M.5 7.5l2.5 2.5M14.5 7.5l-2.5-2.5M14.5 7.5l-2.5 2.5"/><circle cx="7.5" cy="7.5" r="2.3"/></g></svg>
<svg style="left:156px;top:87px" width="17" height="15" viewBox="0 0 17 15"><g transform="translate(1,1)" stroke="#fff" fill="none"><path d="M.5 9.5l1 2 1.5-2 2.5-8 2.5 8 1.5 2.5 1-2.5 1.5-4 1.5 4 1 2 1-2 1 2"/><path d="M5.5 0v15" stroke-dasharray="2 1.5"/></g><g stroke="#a0a0a0" fill="none"><path d="M.5 9.5l1 2 1.5-2 2.5-8 2.5 8 1.5 2.5 1-2.5 1.5-4 1.5 4 1 2 1-2 1 2"/><path d="M5.5 0v15" stroke-dasharray="2 1.5"/></g></svg>
<svg style="left:180px;top:86px" width="14" height="16" viewBox="0 0 14 16"><g transform="translate(1,1)" stroke="#fff" fill="none"><path d="M0 2.5h4.5v3h-4.5M0 4h2.5M4.5 4h3M0 8h7.5M7.5 3v6h3v4h-3M0 11.5h4.5v3h-4.5M4.5 13h3v-1M10.5 8.5h3.5M6.5 0v3M6.5 14v2.5"/></g><g stroke="#a0a0a0" fill="none"><path d="M0 2.5h4.5v3h-4.5M0 4h2.5M4.5 4h3M0 8h7.5M7.5 3v6h3v4h-3M0 11.5h4.5v3h-4.5M4.5 13h3v-1M10.5 8.5h3.5M6.5 0v3M6.5 14v2.5"/></g></svg>
<div class="sep" style="left:202px;top:85px;height:18px"></div>
<svg style="left:211px;top:86px" width="14" height="15" viewBox="0 0 14 15"><g transform="translate(1,1)" stroke="#fff" fill="none"><path d="M.5 7l6.5-6.5 6.5 6.5M9.5 3v-2.5h2.5v4.5M1.5 7v7.5h3.5v-5h2v5h5.5v-7.5M8.5 8.5h2.5v2.5h-2.5z"/></g><g stroke="#a0a0a0" fill="none"><path d="M.5 7l6.5-6.5 6.5 6.5M9.5 3v-2.5h2.5v4.5M1.5 7v7.5h3.5v-5h2v5h5.5v-7.5M8.5 8.5h2.5v2.5h-2.5z"/></g></svg>
<div class="band" style="left:232px;top:81px"></div>
<svg style="left:237px;top:85px" width="3" height="22" viewBox="0 0 3 22" shape-rendering="crispEdges"><rect x="1" y="0" width="1" height="1" fill="#b2b2b2"/><rect x="0" y="1" width="1" height="1" fill="#b2b2b2"/><rect x="1" y="1" width="1" height="1" fill="#9c9c9c"/><rect x="0" y="0" width="1" height="1" fill="#e2e2e2"/><rect x="1" y="5" width="1" height="1" fill="#b2b2b2"/><rect x="0" y="6" width="1" height="1" fill="#b2b2b2"/><rect x="1" y="6" width="1" height="1" fill="#9c9c9c"/><rect x="0" y="5" width="1" height="1" fill="#e2e2e2"/><rect x="1" y="10" width="1" height="1" fill="#b2b2b2"/><rect x="0" y="11" width="1" height="1" fill="#b2b2b2"/><rect x="1" y="11" width="1" height="1" fill="#9c9c9c"/><rect x="0" y="10" width="1" height="1" fill="#e2e2e2"/><rect x="1" y="15" width="1" height="1" fill="#b2b2b2"/><rect x="0" y="16" width="1" height="1" fill="#b2b2b2"/><rect x="1" y="16" width="1" height="1" fill="#9c9c9c"/><rect x="0" y="15" width="1" height="1" fill="#e2e2e2"/><rect x="0" y="19" width="2" height="1" fill="#fafafa"/></svg>
<svg style="left:246px;top:87px" width="16" height="15" viewBox="0 0 16 15"><path d="M4 2.5h9" stroke="#1060ff" stroke-width="2.6"/><circle cx="4.2" cy="2.5" r="2.7" fill="#1078ff"/><circle cx="3.39" cy="1.69" r="0.945" fill="#fff" opacity=".85"/><circle cx="12.8" cy="2.5" r="2.7" fill="#1078ff"/><circle cx="11.99" cy="1.69" r="0.945" fill="#fff" opacity=".85"/><path d="M8.5 5.5v5.5M7 7l1.5-1.8 1.5 1.8M7 9.5l1.5 1.8 1.5-1.8" fill="none" stroke="#505050" stroke-width="1"/><circle cx="1.8" cy="13.2" r="1.8" fill="#1080ff"/><circle cx="1.26" cy="12.66" r="0.63" fill="#fff" opacity=".85"/><circle cx="4.9" cy="13.2" r="1.8" fill="#1080ff"/><circle cx="4.36" cy="12.66" r="0.63" fill="#fff" opacity=".85"/><circle cx="8" cy="13.2" r="1.8" fill="#1080ff"/><circle cx="7.46" cy="12.66" r="0.63" fill="#fff" opacity=".85"/><circle cx="11.100000000000001" cy="13.2" r="1.8" fill="#1080ff"/><circle cx="10.560000000000002" cy="12.66" r="0.63" fill="#fff" opacity=".85"/><circle cx="14.200000000000001" cy="13.2" r="1.8" fill="#1080ff"/><circle cx="13.66" cy="12.66" r="0.63" fill="#fff" opacity=".85"/></svg>
<svg style="left:264px;top:92px" width="7" height="4" viewBox="0 0 7 4" shape-rendering="crispEdges"><path d="M0 0h7v1h-1v1h-1v1h-1v1h-1v-1h-1v-1h-1v-1h-1z" fill="#000"/></svg>
<svg style="left:280px;top:86px" width="12" height="16" viewBox="0 0 12 16"><path d="M.5 5.5h7.5v8h-7.5zM.5 5.5l3.5-3h7.5l-3.5 3M11.5 2.5v8l-3.5 3" fill="none" stroke="#008000" stroke-width=".9"/><path d="M7 0l-2 4 2.5 2.5-3 2.5 2 2.5-2 2.5-2.5 1.5" fill="none" stroke="#000" stroke-width=".9"/></svg>
<svg style="left:296px;top:92px" width="7" height="4" viewBox="0 0 7 4" shape-rendering="crispEdges"><path d="M0 0h7v1h-1v1h-1v1h-1v1h-1v-1h-1v-1h-1v-1h-1z" fill="#000"/></svg>
<svg style="left:310px;top:86px" width="15" height="15" viewBox="0 0 15 15"><circle cx="5" cy="3" r="3" fill="#1090e8"/><circle cx="4.1" cy="2.1" r="1.0499999999999998" fill="#fff" opacity=".85"/><circle cx="10.5" cy="3.2" r="2.5" fill="#1060e0"/><circle cx="9.75" cy="2.45" r="0.875" fill="#fff" opacity=".85"/><circle cx="13.2" cy="7" r="1.9" fill="#10b0f0"/><circle cx="12.629999999999999" cy="6.43" r="0.6649999999999999" fill="#fff" opacity=".85"/><circle cx="2.2" cy="7.8" r="2.2" fill="#8020a0"/><circle cx="1.54" cy="7.14" r="0.77" fill="#fff" opacity=".85"/><circle cx="5" cy="11.2" r="2.5" fill="#7018a0"/><circle cx="4.25" cy="10.45" r="0.875" fill="#fff" opacity=".85"/><circle cx="10.3" cy="11.5" r="3.3" fill="#7820a8"/><circle cx="9.31" cy="10.51" r="1.1549999999999998" fill="#fff" opacity=".85"/><path d="M7.5 11.3h1" stroke="#7018a0" stroke-width="1.5"/></svg>
<svg style="left:328px;top:92px" width="7" height="4" viewBox="0 0 7 4" shape-rendering="crispEdges"><path d="M0 0h7v1h-1v1h-1v1h-1v1h-1v-1h-1v-1h-1v-1h-1z" fill="#000"/></svg>
<svg style="left:345px;top:86px" width="10" height="16" viewBox="0 0 10 16"><rect x="3.5" y="0" width="2.5" height="5.5" fill="#eef4ff" stroke="#2848c8" stroke-width=".8"/><path d="M3.5 5l-3 5.2h8.5l-3-5.2z" fill="#6cd0f8" stroke="#9020c8" stroke-width=".6"/><path d="M1.5 8.5h6.5l1 1.7h-8.5z" fill="#3080e8"/><path d="M1 12.3h8M6.8 11l2.2 1.3M1 14.7h8M3.2 16l-2.2-1.3" stroke="#102090" stroke-width="1" fill="none"/></svg>
<svg style="left:360px;top:92px" width="7" height="4" viewBox="0 0 7 4" shape-rendering="crispEdges"><path d="M0 0h7v1h-1v1h-1v1h-1v1h-1v-1h-1v-1h-1v-1h-1z" fill="#000"/></svg>
<svg style="left:375px;top:90px" width="16" height="10" viewBox="0 0 16 10"><path d="M0 3q2-3.5 4 0t4 0 4 0 4 0" fill="none" stroke="#48cc48" stroke-width=".9"/><path d="M0 6q2-3.5 4 0t4 0 4 0 4 0" fill="none" stroke="#109010" stroke-width=".95"/><path d="M0 9q2-3.5 4 0t4 0 4 0 4 0" fill="none" stroke="#008000" stroke-width=".95"/></svg>
<svg style="left:392px;top:92px" width="7" height="4" viewBox="0 0 7 4" shape-rendering="crispEdges"><path d="M0 0h7v1h-1v1h-1v1h-1v1h-1v-1h-1v-1h-1v-1h-1z" fill="#000"/></svg>
<svg style="left:406px;top:86px" width="15" height="15" viewBox="0 0 15 15"><g transform="translate(3.5,3.5)"><circle cx="0" cy="0" r="3.5" fill="#f4b830"/><path d="M1.2 -3.3v6.6" stroke="#fcd040" stroke-width="1.2" opacity=".8"/><path d="M.5 -3.46A3.5 3.5 0 1 0 .5 3.46A5 5 0 0 1 .5 -3.46z" fill="#b80c0c"/><path d="M-.9 -3.3A3.5 3.5 0 0 0 -.9 3.3A5.5 5.5 0 0 1 -.9 -3.3z" fill="#d81818"/></g><g transform="translate(11.5,3.5)"><circle cx="0" cy="0" r="3.5" fill="#f4b830"/><path d="M1.2 -3.3v6.6" stroke="#fcd040" stroke-width="1.2" opacity=".8"/><path d="M.5 -3.46A3.5 3.5 0 1 0 .5 3.46A5 5 0 0 1 .5 -3.46z" fill="#b80c0c"/><path d="M-.9 -3.3A3.5 3.5 0 0 0 -.9 3.3A5.5 5.5 0 0 1 -.9 -3.3z" fill="#d81818"/></g><g transform="translate(3.5,11.5) scale(-1,1)"><circle cx="0" cy="0" r="3.5" fill="#f4b830"/><path d="M1.2 -3.3v6.6" stroke="#fcd040" stroke-width="1.2" opacity=".8"/><path d="M.5 -3.46A3.5 3.5 0 1 0 .5 3.46A5 5 0 0 1 .5 -3.46z" fill="#b80c0c"/><path d="M-.9 -3.3A3.5 3.5 0 0 0 -.9 3.3A5.5 5.5 0 0 1 -.9 -3.3z" fill="#d81818"/></g><g transform="translate(11.5,11.5)"><circle cx="0" cy="0" r="3.5" fill="#f4b830"/><path d="M1.2 -3.3v6.6" stroke="#fcd040" stroke-width="1.2" opacity=".8"/><path d="M.5 -3.46A3.5 3.5 0 1 0 .5 3.46A5 5 0 0 1 .5 -3.46z" fill="#b80c0c"/><path d="M-.9 -3.3A3.5 3.5 0 0 0 -.9 3.3A5.5 5.5 0 0 1 -.9 -3.3z" fill="#d81818"/></g></svg>
<svg style="left:424px;top:92px" width="7" height="4" viewBox="0 0 7 4" shape-rendering="crispEdges"><path d="M0 0h7v1h-1v1h-1v1h-1v1h-1v-1h-1v-1h-1v-1h-1z" fill="#000"/></svg>
<svg style="left:438px;top:87px" width="17" height="14" viewBox="0 0 17 14"><path d="M2 3q-2 4 0 9M15 3q2 4 0 9" fill="none" stroke="#606060" stroke-width="1"/><path d="M2.5 2l3 5h6l3 5" fill="none" stroke="#202020" stroke-width="1.2"/><circle cx="2.5" cy="2" r="1.9" fill="#f0c800"/><circle cx="1.9300000000000002" cy="1.4300000000000002" r="0.6649999999999999" fill="#fff" opacity=".85"/><circle cx="5.5" cy="7" r="1.9" fill="#1048e0"/><circle cx="4.93" cy="6.43" r="0.6649999999999999" fill="#fff" opacity=".85"/><circle cx="11.5" cy="7" r="1.9" fill="#1048e0"/><circle cx="10.93" cy="6.43" r="0.6649999999999999" fill="#fff" opacity=".85"/><circle cx="14.5" cy="12" r="1.9" fill="#f0c800"/><circle cx="13.93" cy="11.43" r="0.6649999999999999" fill="#fff" opacity=".85"/></svg>
<svg style="left:456px;top:92px" width="7" height="4" viewBox="0 0 7 4" shape-rendering="crispEdges"><path d="M0 0h7v1h-1v1h-1v1h-1v1h-1v-1h-1v-1h-1v-1h-1z" fill="#000"/></svg>
<svg style="left:470px;top:86px" width="16" height="15" viewBox="0 0 16 15"><rect x="0" y="0" width="7.5" height="7" fill="#e8a080"/><rect x="8.5" y="0" width="7.5" height="7" fill="#e8a080"/><rect x="0" y="8" width="7.5" height="7" fill="#e8a080"/><rect x="8.5" y="8" width="7.5" height="7" fill="#e8a080"/><g fill="none" stroke="#601030" stroke-width="1.2"><path d="M2 1.5h2.5q1.5 0 1.5 2t-1.5 2h-2.5zM3 1.5v4"/><path d="M10.5 6v-4.5h3.5M10.5 3.5h2.5"/><path d="M1.5 9.5h4.5M3.7 9.5v4.5"/><path d="M10.5 9.5h2.5q1 0 1 1t-1 1.2h-2.5zM10.5 11.7h2.5q1.2 0 1.2 1.1t-1.2 1.2h-2.5z"/><path d="M8 5.5v4.5M5.5 7.5h5"/></g></svg>
<svg style="left:488px;top:92px" width="7" height="4" viewBox="0 0 7 4" shape-rendering="crispEdges"><path d="M0 0h7v1h-1v1h-1v1h-1v1h-1v-1h-1v-1h-1v-1h-1z" fill="#000"/></svg>
<svg style="left:503px;top:87px" width="16" height="15" viewBox="0 0 16 15"><ellipse cx="4" cy="3.8" rx="3.8" ry="3.2" transform="rotate(40 4 3.8)" fill="#f8d800"/><ellipse cx="12" cy="3.8" rx="3.8" ry="3" transform="rotate(-40 12 3.8)" fill="#1070e8"/><ellipse cx="4" cy="11.2" rx="3.8" ry="3" transform="rotate(-40 4 11.2)" fill="#1050e8"/><ellipse cx="12" cy="11.2" rx="3.8" ry="3.2" transform="rotate(40 12 11.2)" fill="#f8d800"/><ellipse cx="3" cy="2.8" rx="1.3" ry=".9" fill="#fffbd0"/><ellipse cx="12.5" cy="2.5" rx="1.5" ry=".8" transform="rotate(-40 12.5 2.5)" fill="#70d8ff"/><ellipse cx="4" cy="10.5" rx="1.5" ry=".8" transform="rotate(-40 4 10.5)" fill="#70d8ff"/><ellipse cx="11.5" cy="10.2" rx="1.3" ry=".9" fill="#fffbd0"/><path d="M9.5 14.5q3 .5 5.5-2.5" fill="none" stroke="#b09000" stroke-width=".8"/></svg>
<svg style="left:520px;top:92px" width="7" height="4" viewBox="0 0 7 4" shape-rendering="crispEdges"><path d="M0 0h7v1h-1v1h-1v1h-1v1h-1v-1h-1v-1h-1v-1h-1z" fill="#000"/></svg>
<svg style="left:534px;top:86px" width="15" height="15" viewBox="0 0 15 15"><path d="M7.5 1l1 4 4-2.5-2.5 4 4 1-4 1 2.5 4-4-2.5-1 4-1-4-4 2.5 2.5-4-4-1 4-1-2.5-4 4 2.5z" fill="#ececec" stroke="#383838" stroke-width=".9"/><circle cx="2.3" cy="2.3" r="2" fill="#1090ff"/><circle cx="1.6999999999999997" cy="1.6999999999999997" r="0.7" fill="#fff" opacity=".85"/><circle cx="12.7" cy="2.3" r="2" fill="#1090ff"/><circle cx="12.1" cy="1.6999999999999997" r="0.7" fill="#fff" opacity=".85"/><circle cx="2.3" cy="12.7" r="2" fill="#1090ff"/><circle cx="1.6999999999999997" cy="12.1" r="0.7" fill="#fff" opacity=".85"/><circle cx="12.7" cy="12.7" r="2" fill="#1090ff"/><circle cx="12.1" cy="12.1" r="0.7" fill="#fff" opacity=".85"/></svg>
<svg style="left:552px;top:92px" width="7" height="4" viewBox="0 0 7 4" shape-rendering="crispEdges"><path d="M0 0h7v1h-1v1h-1v1h-1v1h-1v-1h-1v-1h-1v-1h-1z" fill="#000"/></svg>
<svg style="left:568px;top:87px" width="14" height="14" viewBox="0 0 14 14"><path d="M11 3.5q-1.5-2.5-5-2.5-5 0-5 6t5 6q2 0 3-1v-4" fill="none" stroke="#000" stroke-width="2.6"/><path d="M7 7.5h6" stroke="#000" stroke-width="2"/><path d="M9.5 13.5l1.5-4 1 4M12 13.5q1.5 0 1-1.5t1-1.5" fill="none" stroke="#1030e0" stroke-width="1"/></svg>
<svg style="left:584px;top:92px" width="7" height="4" viewBox="0 0 7 4" shape-rendering="crispEdges"><path d="M0 0h7v1h-1v1h-1v1h-1v1h-1v-1h-1v-1h-1v-1h-1z" fill="#000"/></svg>
<svg style="left:598px;top:86px" width="16" height="15" viewBox="0 0 16 15"><circle cx="7.5" cy="7.5" r="6.9" fill="#f2f2f6" stroke="#1038d0" stroke-width="1"/><circle cx="7.3" cy="8.2" r="2.3" fill="#c00010"/><circle cx="6.609999999999999" cy="7.51" r="0.8049999999999999" fill="#fff" opacity=".85"/><path d="M9 6.5l3-3" stroke="#000" stroke-width="1.1"/><path d="M10.5 3h2.3v2.3" fill="none" stroke="#000" stroke-width="1.1"/></svg>
<svg style="left:616px;top:92px" width="7" height="4" viewBox="0 0 7 4" shape-rendering="crispEdges"><path d="M0 0h7v1h-1v1h-1v1h-1v1h-1v-1h-1v-1h-1v-1h-1z" fill="#000"/></svg>
<svg style="left:630px;top:86px" width="15" height="15" viewBox="0 0 15 15"><rect x="2.5" y="2" width="10.5" height="11" fill="#f4f4f4" stroke="#707070" stroke-width="1"/><path d="M5.5 2.5v10M11 3l-5.5 4.5 5.5 5" fill="none" stroke="#303030" stroke-width="1"/><circle cx="2.3" cy="2.3" r="1.75" fill="#10c010"/><circle cx="1.775" cy="1.775" r="0.6124999999999999" fill="#fff" opacity=".85"/><circle cx="13" cy="2.3" r="1.75" fill="#10c010"/><circle cx="12.475" cy="1.775" r="0.6124999999999999" fill="#fff" opacity=".85"/><circle cx="2.3" cy="12.8" r="1.75" fill="#10c010"/><circle cx="1.775" cy="12.275" r="0.6124999999999999" fill="#fff" opacity=".85"/><circle cx="13" cy="12.8" r="1.75" fill="#10c010"/><circle cx="12.475" cy="12.275" r="0.6124999999999999" fill="#fff" opacity=".85"/><circle cx="10" cy="8" r="1.75" fill="#10c010"/><circle cx="9.475" cy="7.475" r="0.6124999999999999" fill="#fff" opacity=".85"/></svg>
<svg style="left:648px;top:92px" width="7" height="4" viewBox="0 0 7 4" shape-rendering="crispEdges"><path d="M0 0h7v1h-1v1h-1v1h-1v1h-1v-1h-1v-1h-1v-1h-1z" fill="#000"/></svg>
<svg style="left:662px;top:86px" width="16" height="16" viewBox="0 0 16 16"><rect x=".5" y=".5" width="15" height="15" fill="#fff" stroke="#909090"/><path d="M4 0v16M8 0v16M12 0v16M0 4h16M0 8h16M0 12h16" stroke="#b0b0b0" stroke-width="1"/><circle cx="4" cy="3.5" r="2.8" fill="#8848b8"/><circle cx="3.16" cy="2.66" r="0.9799999999999999" fill="#fff" opacity=".85"/><circle cx="10" cy="8.5" r="3.2" fill="#9050c8"/><circle cx="9.04" cy="7.54" r="1.1199999999999999" fill="#fff" opacity=".85"/><circle cx="6" cy="10" r="2" fill="#8040b8"/><circle cx="5.4" cy="9.4" r="0.7" fill="#fff" opacity=".85"/><circle cx="9.5" cy="2.5" r="1.5" fill="#7c2cac"/><circle cx="9.05" cy="2.05" r="0.5249999999999999" fill="#fff" opacity=".85"/><circle cx="13" cy="3" r="1.5" fill="#7c2cac"/><circle cx="12.55" cy="2.55" r="0.5249999999999999" fill="#fff" opacity=".85"/><circle cx="13.5" cy="7" r="1.3" fill="#7c2cac"/><circle cx="13.11" cy="6.61" r="0.45499999999999996" fill="#fff" opacity=".85"/><circle cx="3" cy="13.5" r="1.4" fill="#7c2cac"/><circle cx="2.58" cy="13.08" r="0.48999999999999994" fill="#fff" opacity=".85"/><circle cx="7.5" cy="14" r="1.3" fill="#7c2cac"/><circle cx="7.11" cy="13.61" r="0.45499999999999996" fill="#fff" opacity=".85"/><circle cx="11.5" cy="13.5" r="1.4" fill="#7c2cac"/><circle cx="11.08" cy="13.08" r="0.48999999999999994" fill="#fff" opacity=".85"/><circle cx="7" cy="6" r="1.3" fill="#7c2cac"/><circle cx="6.61" cy="5.61" r="0.45499999999999996" fill="#fff" opacity=".85"/></svg>
<svg style="left:680px;top:92px" width="7" height="4" viewBox="0 0 7 4" shape-rendering="crispEdges"><path d="M0 0h7v1h-1v1h-1v1h-1v1h-1v-1h-1v-1h-1v-1h-1z" fill="#000"/></svg>
<svg style="left:694px;top:86px" width="15" height="15" viewBox="0 0 15 15"><rect x=".6" y=".6" width="13.8" height="13.8" rx="2.5" fill="#fff" stroke="#101010" stroke-width="1"/><path d="M2 2.5l2-1 2 1.5 2-1.5 2 1 2-1.5 1.5 2-2 1.5-2 2.5-2-2-2 .5-2-1.5-1.5 0z" fill="#e0307c"/><path d="M2 6l2.5-.5 2 2 1.5 2-1 2 1.5 1.5-3 .5-1.5-2-2-.5 1-2z" fill="#2070e0"/><path d="M11 5.5l2.5-.5.5 3-1.5 2 1 2-2.5 2-2-.5 1-3-1.5-2 2-1z" fill="#b8a010"/><g fill="#fff"><circle cx="5" cy="7.5" r=".8"/><circle cx="11" cy="9" r=".8"/><circle cx="8" cy="4" r=".7"/><circle cx="4.5" cy="3.3" r=".6"/><circle cx="10.8" cy="2.8" r=".6"/><circle cx="3.5" cy="10.5" r=".7"/><circle cx="6.5" cy="11.5" r=".6"/><circle cx="12.3" cy="6.5" r=".6"/><circle cx="10.5" cy="12.3" r=".7"/><circle cx="7" cy="8.8" r=".6"/></g></svg>
<svg style="left:712px;top:92px" width="7" height="4" viewBox="0 0 7 4" shape-rendering="crispEdges"><path d="M0 0h7v1h-1v1h-1v1h-1v1h-1v-1h-1v-1h-1v-1h-1z" fill="#000"/></svg>
<svg style="left:727px;top:86px" width="14" height="15" viewBox="0 0 14 15"><path d="M5 0h5l4 4.5v6l-4.5 4.5h-3l-6-6.5v-4z" fill="#3434f0"/><path d="M5 0h5l-5.5 5-4 -.5z" fill="#18a8ff"/><path d="M.5 4.5l4 .5v5l2 5-6-6.5z" fill="#3030a0"/><path d="M4.5 10l5 5h-3z" fill="#3030a0"/><rect x="6" y="6.5" width="5" height="2.5" fill="#1818c0"/></svg>
<svg style="left:744px;top:92px" width="7" height="4" viewBox="0 0 7 4" shape-rendering="crispEdges"><path d="M0 0h7v1h-1v1h-1v1h-1v1h-1v-1h-1v-1h-1v-1h-1z" fill="#000"/></svg>
<svg style="left:758px;top:86px" width="16" height="16" viewBox="0 0 16 16"><circle cx="7.5" cy="8.5" r="6.8" fill="#d8f0f8" stroke="#60b8d8" stroke-width="1.3"/><path d="M1 15l14.5-15" stroke="#58a8c8" stroke-width="1.2"/><path d="M3.5 13l2.5-8.5 4 7.5 2.5-8.5" fill="none" stroke="#2888a8" stroke-width="1.8"/></svg>
<svg style="left:776px;top:92px" width="7" height="4" viewBox="0 0 7 4" shape-rendering="crispEdges"><path d="M0 0h7v1h-1v1h-1v1h-1v1h-1v-1h-1v-1h-1v-1h-1z" fill="#000"/></svg>
<svg style="left:790px;top:86px" width="16" height="16" viewBox="0 0 16 16"><path d="M0 7.5l7-7h3.5l-7 7z" fill="#10c010"/><path d="M0 7.5h3.5" stroke="#404000" stroke-width=".8"/><path d="M8.5 5l2.5-2.5h5v5l-2.5 2.5h-5z" fill="#1050e8"/><rect x="9.5" y="5" width="3.5" height="4" fill="#20c8ff"/><path d="M2.5 13l2.5-2.5h5.5l2.5 2.5-2.5 2.5h-5.5z" fill="#c80808"/><path d="M4 13h8" stroke="#f05050" stroke-width="1"/><path d="M9.5 13l1.5-1.5 1.5 1.5-1.5 1.5z" fill="#ffb000"/></svg>
<svg style="left:808px;top:92px" width="7" height="4" viewBox="0 0 7 4" shape-rendering="crispEdges"><path d="M0 0h7v1h-1v1h-1v1h-1v1h-1v-1h-1v-1h-1v-1h-1z" fill="#000"/></svg>
<svg style="left:823px;top:87px" width="14" height="14" viewBox="0 0 14 14"><circle cx="6.5" cy="6.5" r="6.1" fill="#1c5a9e" stroke="#2c7be0" stroke-width=".9"/><path d="M3.2 3.5l7.8 4-4.5 3.5-1-3.5z" fill="#941c34" stroke="#fff" stroke-width=".9" stroke-linejoin="round"/></svg>
<svg style="left:840px;top:92px" width="7" height="4" viewBox="0 0 7 4" shape-rendering="crispEdges"><path d="M0 0h7v1h-1v1h-1v1h-1v1h-1v-1h-1v-1h-1v-1h-1z" fill="#000"/></svg>
<svg style="left:854px;top:87px" width="16" height="13" viewBox="0 0 16 13"><rect x="1" y="0" width="15" height="12" fill="#e4e4e4"/><path d="M4 0v12M7 0v12M10 0v12M13 0v12M1 3h15M1 6h15M1 9h15" stroke="#c0c0c0" stroke-width=".8"/><path d="M.7 0v12.3h15.3" fill="none" stroke="#000" stroke-width="1.3"/><path d="M2 10.5l1-1.5 1 1.5 1-2 1 2 1.5-3.5 2-6.5 2 7 1 2.5 1-1.5 1 1.5" fill="none" stroke="#f00000" stroke-width=".9"/></svg>
<svg style="left:872px;top:92px" width="7" height="4" viewBox="0 0 7 4" shape-rendering="crispEdges"><path d="M0 0h7v1h-1v1h-1v1h-1v1h-1v-1h-1v-1h-1v-1h-1z" fill="#000"/></svg>
<svg style="left:886px;top:86px" width="16" height="15" viewBox="0 0 16 15"><path d="M0 2q2.5-2 5 0t5.5 1 5-2.5" fill="none" stroke="#10a0e8" stroke-width="2.4"/><path d="M0 7q3-1.5 6 .5t5 0 5 .5" fill="none" stroke="#10a0e8" stroke-width="2.4"/><path d="M0 13q2.5-2 5 0t5.5 .5 5-2" fill="none" stroke="#10a0e8" stroke-width="2.4"/><path d="M5 3.5l4 3M5 11.5l4-3M11 5q3 1 4.5 3.5" fill="none" stroke="#10a0e8" stroke-width="1.8"/><path d="M10.5 8l1.5-1.5 1.5 1.5-1.5 1.5z" fill="#600090" stroke="#000" stroke-width=".4"/></svg>
<svg style="left:904px;top:92px" width="7" height="4" viewBox="0 0 7 4" shape-rendering="crispEdges"><path d="M0 0h7v1h-1v1h-1v1h-1v1h-1v-1h-1v-1h-1v-1h-1z" fill="#000"/></svg>
<svg style="left:918px;top:86px" width="15" height="16" viewBox="0 0 15 16"><rect x="0" y="3" width="14.5" height="9.5" fill="#3c70ff"/><path d="M0 6.2h14.5M0 9.4h14.5M4.8 3v9.5M9.7 3v9.5" stroke="#b8d0ff" stroke-width="1"/><path d="M9.5 0l-2.5 4.5 2 2.5-2.5 3 1.5 2.5-2 2.5-2 .5" fill="none" stroke="#000" stroke-width=".95"/></svg>
<svg style="left:936px;top:92px" width="7" height="4" viewBox="0 0 7 4" shape-rendering="crispEdges"><path d="M0 0h7v1h-1v1h-1v1h-1v1h-1v-1h-1v-1h-1v-1h-1z" fill="#000"/></svg>
<svg style="left:950px;top:86px" width="16" height="16" viewBox="0 0 16 16"><circle cx="8" cy="8" r="7" fill="none" stroke="#30a8c8" stroke-width=".8" stroke-dasharray="1.5 1.5"/><circle cx="13.8" cy="8" r="1.7" fill="#1070e0"/><circle cx="13.290000000000001" cy="7.49" r="0.595" fill="#fff" opacity=".85"/><circle cx="12.102851961169758" cy="12.099586050411123" r="1.7" fill="#1070e0"/><circle cx="11.592851961169758" cy="11.589586050411123" r="0.595" fill="#fff" opacity=".85"/><circle cx="8.004618694922254" cy="13.799998161004641" r="1.7" fill="#1070e0"/><circle cx="7.494618694922254" cy="13.289998161004641" r="0.595" fill="#fff" opacity=".85"/><circle cx="3.90368246004397" cy="12.106115270160906" r="1.7" fill="#1070e0"/><circle cx="3.39368246004397" cy="11.596115270160906" r="0.595" fill="#fff" opacity=".85"/><circle cx="2.2000073559802713" cy="8.009237386915624" r="1.7" fill="#1070e0"/><circle cx="1.6900073559802713" cy="7.499237386915624" r="0.595" fill="#fff" opacity=".85"/><circle cx="3.8906240246848176" cy="3.9069535681228356" r="1.7" fill="#1070e0"/><circle cx="3.380624024684818" cy="3.3969535681228358" r="0.595" fill="#fff" opacity=".85"/><circle cx="7.986143926948767" cy="2.2000165509512355" r="1.7" fill="#1070e0"/><circle cx="7.476143926948767" cy="1.6900165509512355" r="0.595" fill="#fff" opacity=".85"/><circle cx="12.089772728248853" cy="3.8873659254351427" r="1.7" fill="#1070e0"/><circle cx="11.579772728248853" cy="3.377365925435143" r="0.595" fill="#fff" opacity=".85"/><circle cx="6.5" cy="6" r="2.1" fill="#e01010"/><circle cx="5.87" cy="5.37" r="0.735" fill="#fff" opacity=".85"/><circle cx="10" cy="6.5" r="2.1" fill="#e01010"/><circle cx="9.37" cy="5.87" r="0.735" fill="#fff" opacity=".85"/><circle cx="6" cy="9.5" r="2.1" fill="#e01010"/><circle cx="5.37" cy="8.87" r="0.735" fill="#fff" opacity=".85"/><circle cx="9.5" cy="10.2" r="2.1" fill="#e01010"/><circle cx="8.87" cy="9.569999999999999" r="0.735" fill="#fff" opacity=".85"/><circle cx="8" cy="8" r="1.8" fill="#ff3030"/><circle cx="7.46" cy="7.46" r="0.63" fill="#fff" opacity=".85"/></svg>
<svg style="left:968px;top:92px" width="7" height="4" viewBox="0 0 7 4" shape-rendering="crispEdges"><path d="M0 0h7v1h-1v1h-1v1h-1v1h-1v-1h-1v-1h-1v-1h-1z" fill="#000"/></svg>
<div class="band" style="left:981px;top:81px"></div>
<svg style="left:986px;top:85px" width="3" height="22" viewBox="0 0 3 22" shape-rendering="crispEdges"><rect x="1" y="0" width="1" height="1" fill="#b2b2b2"/><rect x="0" y="1" width="1" height="1" fill="#b2b2b2"/><rect x="1" y="1" width="1" height="1" fill="#9c9c9c"/><rect x="0" y="0" width="1" height="1" fill="#e2e2e2"/><rect x="1" y="5" width="1" height="1" fill="#b2b2b2"/><rect x="0" y="6" width="1" height="1" fill="#b2b2b2"/><rect x="1" y="6" width="1" height="1" fill="#9c9c9c"/><rect x="0" y="5" width="1" height="1" fill="#e2e2e2"/><rect x="1" y="10" width="1" height="1" fill="#b2b2b2"/><rect x="0" y="11" width="1" height="1" fill="#b2b2b2"/><rect x="1" y="11" width="1" height="1" fill="#9c9c9c"/><rect x="0" y="10" width="1" height="1" fill="#e2e2e2"/><rect x="1" y="15" width="1" height="1" fill="#b2b2b2"/><rect x="0" y="16" width="1" height="1" fill="#b2b2b2"/><rect x="1" y="16" width="1" height="1" fill="#9c9c9c"/><rect x="0" y="15" width="1" height="1" fill="#e2e2e2"/><rect x="0" y="19" width="2" height="1" fill="#fafafa"/></svg>
<svg style="left:996px;top:89px" width="14" height="10" viewBox="0 0 14 10"><g transform="translate(1,1)" stroke="#fff" fill="none"><path d="M.5 .5h9v9h-9zM8 5h-5.5M4.5 3l-2 2 2 2"/><path d="M11.5 0v10M13.5 0v10" stroke-dasharray="1 1"/></g><g stroke="#a0a0a0" fill="none"><path d="M.5 .5h9v9h-9zM8 5h-5.5M4.5 3l-2 2 2 2"/><path d="M11.5 0v10M13.5 0v10" stroke-dasharray="1 1"/></g></svg>
<svg style="left:1019px;top:89px" width="14" height="10" viewBox="0 0 14 10"><g transform="translate(1,1)" stroke="#fff" fill="none"><path d="M4.5 .5h9v9h-9zM6 5h5.5M9.5 3l2 2-2 2"/><path d="M.5 0v10M2.5 0v10" stroke-dasharray="1 1"/></g><g stroke="#a0a0a0" fill="none"><path d="M4.5 .5h9v9h-9zM6 5h5.5M9.5 3l2 2-2 2"/><path d="M.5 0v10M2.5 0v10" stroke-dasharray="1 1"/></g></svg>
<svg style="left:1044px;top:87px" width="10" height="14" viewBox="0 0 10 14"><g transform="translate(1,1)" stroke="#fff" fill="none"><path d="M.5 .5h9v9h-9zM5 8v-5.5M3 4.5l2-2 2 2"/><path d="M0 11.5h10M0 13.5h10" stroke-dasharray="1 1"/></g><g stroke="#a0a0a0" fill="none"><path d="M.5 .5h9v9h-9zM5 8v-5.5M3 4.5l2-2 2 2"/><path d="M0 11.5h10M0 13.5h10" stroke-dasharray="1 1"/></g></svg>
<svg style="left:1066px;top:87px" width="7" height="14" viewBox="0 0 7 14"><g transform="translate(1,1)" stroke="#fff" fill="none"><path d="M7 4.5h-5.5v9h5.5M5 7v4.5l1.5-1.5"/><path d="M0 .5h7M0 2.5h7" stroke-dasharray="1 1"/></g><g stroke="#a0a0a0" fill="none"><path d="M7 4.5h-5.5v9h5.5M5 7v4.5l1.5-1.5"/><path d="M0 .5h7M0 2.5h7" stroke-dasharray="1 1"/></g></svg>
</div>

<!-- project panel -->
<div id="project">
<div class="a" style="left:5px;top:113px;width:159px;height:17px;background:#bfcddb"></div>
<div class="t" style="left:8px;top:115px;letter-spacing:-.4px">Project</div>
<svg style="left:168px;top:118px" width="7" height="7" viewBox="0 0 7 7"><path d="M.5 .5l6 6M6.5 .5l-6 6" stroke="#000" stroke-width="1.6" fill="none"/></svg>
<div class="a" style="left:5px;top:156px;width:172px;height:620px;background:#fff;border-top:1px solid #a0a0a0;border-left:1px solid #a0a0a0;border-right:1px solid #fff;border-bottom:1px solid #fff"></div>
<div class="a" style="left:6px;top:157px;width:170px;height:618px;background:#fff;border-top:1px solid #696969;border-left:1px solid #696969;border-right:1px solid #e3e3e3;border-bottom:1px solid #e3e3e3"></div>
<div class="a" style="left:45px;top:176px;width:65px;height:18px;background:#f0f0f0"></div>
<div class="t" style="left:28px;top:160px;font-weight:bold;letter-spacing:-.5px">ethanol</div>
<div class="t" style="left:47px;top:178px">ethanol.xsd</div>
<svg style="left:9px;top:134px" width="16" height="16" viewBox="0 0 16 16"><path d="M1.5 3.5h6l3 3v8q0 1-1 1h-8q-1 0-1-1v-10q0-1 1-1z" fill="#fff" stroke="#000"/><path d="M2.5 14.5l7-7v7z" fill="#ffff8c" opacity=".75"/><path d="M7.5 3.5v3h3" fill="none" stroke="#000"/><path d="M11 7v8q0 1-1 1h-8" fill="none" stroke="#000"/><path d="M9 3.5q1.5-3 4.5-2.5t2 3.5" fill="none" stroke="#000" stroke-width="1.1"/><path d="M13.5 4.5l2 1.5 .5-2.5z" fill="#000"/></svg>
<svg style="left:32px;top:135px" width="15" height="15" viewBox="0 0 15 15"><path d="M1.5 1.5q6 5 11 12" fill="none" stroke="#e01010" stroke-width="1.8"/><path d="M13.5 .5q-7 6-11.5 12.5" fill="none" stroke="#e01010" stroke-width="1.8"/><path d="M2 12.5l-.5 1.5" stroke="#f0a020" stroke-width="1.2"/><circle cx="13.5" cy="14" r=".7" fill="#e01010"/></svg>
<svg style="left:54px;top:135px" width="17" height="15" viewBox="0 0 17 15"><g transform="translate(1,1)" stroke="#fff" fill="none"><path d="M.5 6.5h3l1-1.5h4l1 1.5h2.5v7h-11.5zM.5 8h11.5"/><path d="M13.5 1v7M10.5 4.5h6M11.5 2l4 5M15.5 2l-4 5"/></g><g stroke="#a0a0a0" fill="none"><path d="M.5 6.5h3l1-1.5h4l1 1.5h2.5v7h-11.5zM.5 8h11.5"/><path d="M13.5 1v7M10.5 4.5h6M11.5 2l4 5M15.5 2l-4 5"/></g></svg>
<div class="sep" style="left:77px;top:134px;height:18px"></div>
<svg style="left:86px;top:134px" width="14" height="17" viewBox="0 0 14 17"><path d="M.5 .5h8l4 4v11h-12z" fill="#ffffdc" stroke="#101010" stroke-width=".8"/><path d="M8.5 .5v4h4" fill="#fff" stroke="#101010" stroke-width=".8"/><path d="M13 5v11.2h-12" fill="none" stroke="#000" stroke-width=".8"/><path d="M9.5 8q-1-2.5-3.5-2t-2.5 3" fill="none" stroke="#009000" stroke-width="1.1"/><path d="M7.5 4l3 1.5-1.5 3z" fill="#008000"/><path d="M3.5 10.5q1 2.5 3.5 2t2.5-3" fill="none" stroke="#009000" stroke-width="1.1"/><path d="M5.5 14.5l-3-1.5 1.5-3z" fill="#008000"/></svg>
<svg style="left:108px;top:135px" width="15" height="15" viewBox="0 0 15 15"><path d="M0 6l2.8-6h1.4l2.8 6h-1.7l-.5-1.3h-2.6l-.5 1.3zM2.7 3.5h1.6l-.8-2z" fill="#3050f0"/><path d="M.5 8h6v1.2l-4 4.3h4v1.5h-6.5v-1.2l4-4.3h-3.5z" fill="#800090"/><path d="M11.5 0v12" stroke="#000" stroke-width="1.4"/><path d="M8.8 10.5h5.4l-2.7 4.5z" fill="#000"/></svg>
<svg style="left:132px;top:141px" width="7" height="4" viewBox="0 0 7 4" shape-rendering="crispEdges"><path d="M0 0h7v1h-1v1h-1v1h-1v1h-1v-1h-1v-1h-1v-1h-1z" fill="#000"/></svg>
<div class="sep" style="left:146px;top:134px;height:18px"></div>
<svg style="left:154px;top:135px" width="16" height="15" viewBox="0 0 16 15"><path d="M1 2.5v10l7 2 7-2v-10" fill="#208040" stroke="#104820" stroke-width="1"/><path d="M2 .5q3 0 6 3v10q-3-2.5-6-2.5z" fill="#fff" stroke="#707070" stroke-width=".6"/><path d="M14 .5q-3 0-6 3v10q3-2.5 6-2.5z" fill="#fffce0" stroke="#707070" stroke-width=".6"/><path d="M9 11l4-7v6z" fill="#ffff90" opacity=".8"/><path d="M8 3.5v10" stroke="#808080" stroke-width="1"/><path d="M12 11l3-1v-6" fill="#a0a0a0" opacity=".6"/></svg>
<svg style="left:7px;top:159px" width="16" height="16" viewBox="0 0 16 16"><rect x=".5" y=".5" width="15" height="15" fill="#fff" stroke="#2c65a0"/><path d="M2 2h12v12h-3v-9h-9z" fill="#0094ff"/><path d="M2 6h8v8h-3v-5h-5z" fill="#2c65a0"/><rect x="2" y="10" width="4" height="4" fill="#000"/></svg>
<svg style="left:26px;top:177px" width="16" height="16" viewBox="0 0 16 16"><path d="M3.5 2.5l9 11M8 2.5l-4 5M7 8.5l5-1" stroke="#909090" stroke-width="1"/><circle cx="6" cy="6" r="1.7" fill="#e8e8e8"/><circle cx="5.49" cy="5.49" r="0.595" fill="#fff" opacity=".85"/><circle cx="8.5" cy="8.5" r="1.7" fill="#e0e0e0"/><circle cx="7.99" cy="7.99" r="0.595" fill="#fff" opacity=".85"/><circle cx="6.5" cy="10.5" r="1.7" fill="#e8e8e8"/><circle cx="5.99" cy="9.99" r="0.595" fill="#fff" opacity=".85"/><circle cx="5" cy="4" r="1.2" fill="#e8e8e8"/><circle cx="4.64" cy="3.64" r="0.42" fill="#fff" opacity=".85"/><circle cx="6" cy="6" r="1.7" fill="none" stroke="#808080" stroke-width=".6"/><circle cx="8.5" cy="8.5" r="1.7" fill="none" stroke="#808080" stroke-width=".6"/><circle cx="6.5" cy="10.5" r="1.7" fill="none" stroke="#808080" stroke-width=".6"/><circle cx="7.3" cy="7.3" r=".9" fill="#30c0f0"/><circle cx="3" cy="2.5" r="1.9" fill="#f00000"/><circle cx="2.43" cy="1.9300000000000002" r="0.6649999999999999" fill="#fff" opacity=".85"/><circle cx="8.5" cy="2.5" r="1.9" fill="#f00000"/><circle cx="7.93" cy="1.9300000000000002" r="0.6649999999999999" fill="#fff" opacity=".85"/><circle cx="2" cy="6.5" r="1.8" fill="#1070f0"/><circle cx="1.46" cy="5.96" r="0.63" fill="#fff" opacity=".85"/><circle cx="12.5" cy="9.5" r="1.8" fill="#1070f0"/><circle cx="11.96" cy="8.96" r="0.63" fill="#fff" opacity=".85"/><circle cx="9.5" cy="13" r="1.9" fill="#f00000"/><circle cx="8.93" cy="12.43" r="0.6649999999999999" fill="#fff" opacity=".85"/></svg>
<svg style="left:15px;top:177px" width="13" height="11" viewBox="0 0 13 11" shape-rendering="crispEdges"><path d="M.5 0v10" stroke="#808080" stroke-dasharray="1 1"/><path d="M1 9.5h11" stroke="#808080" stroke-dasharray="1 1"/></svg>
</div>

<!-- MDI area -->
<div class="a" style="left:181px;top:107px;width:887px;height:540px;background:#ababab;border-top:1px solid #a0a0a0;border-left:1px solid #a0a0a0;border-right:1px solid #fff;border-bottom:1px solid #fff"></div>
<div class="a" style="left:182px;top:108px;width:885px;height:538px;background:#ababab;border-top:1px solid #696969;border-left:1px solid #696969;border-right:1px solid #e3e3e3;border-bottom:1px solid #e3e3e3"></div>

<!-- child window -->
<div id="child">
<div class="a" style="left:193px;top:122px;width:701px;height:466px;background:#000;border-radius:7px 7px 0 0"></div>
<div class="a" style="left:194px;top:123px;width:698px;height:464px;border-radius:6px 6px 0 0;background:#fff"></div>
<div class="a" style="left:892px;top:128px;width:1px;height:459px;background:#46d0ee"></div>
<div class="a" style="left:194px;top:586px;width:699px;height:1px;background:#46d0ee"></div>
<div class="a" style="left:195px;top:124px;width:697px;height:462px;border-radius:5px 5px 0 0;background:linear-gradient(180deg,#98b3d2 0px,#a9c3e0 12px,#b9d1ea 29px,#b9d1ea 100%)"></div>
<div class="a" style="left:887px;top:154px;width:5px;height:89px;background:linear-gradient(180deg,#bdd4ec,#dde9f7)"></div>
<div class="a" style="left:195px;top:154px;width:5px;height:89px;background:linear-gradient(180deg,#bdd4ec,#dde9f7)"></div>
<div class="a" style="left:202px;top:153px;width:684px;height:427px;background:#000;border-top:1px solid #6d6d6d;border-left:1px solid #6d6d6d;border-right:2px solid #fff;border-bottom:2px solid #fff"></div>
<div class="t" style="left:223px;top:135px">ethanol.xsd *</div>
<svg style="left:203px;top:133px" width="16" height="16" viewBox="0 0 16 16"><path d="M3.5 2.5l9 11M8 2.5l-4 5M7 8.5l5-1" stroke="#909090" stroke-width="1"/><circle cx="6" cy="6" r="1.7" fill="#e8e8e8"/><circle cx="5.49" cy="5.49" r="0.595" fill="#fff" opacity=".85"/><circle cx="8.5" cy="8.5" r="1.7" fill="#e0e0e0"/><circle cx="7.99" cy="7.99" r="0.595" fill="#fff" opacity=".85"/><circle cx="6.5" cy="10.5" r="1.7" fill="#e8e8e8"/><circle cx="5.99" cy="9.99" r="0.595" fill="#fff" opacity=".85"/><circle cx="5" cy="4" r="1.2" fill="#e8e8e8"/><circle cx="4.64" cy="3.64" r="0.42" fill="#fff" opacity=".85"/><circle cx="6" cy="6" r="1.7" fill="none" stroke="#808080" stroke-width=".6"/><circle cx="8.5" cy="8.5" r="1.7" fill="none" stroke="#808080" stroke-width=".6"/><circle cx="6.5" cy="10.5" r="1.7" fill="none" stroke="#808080" stroke-width=".6"/><circle cx="7.3" cy="7.3" r=".9" fill="#30c0f0"/><circle cx="3" cy="2.5" r="1.9" fill="#f00000"/><circle cx="2.43" cy="1.9300000000000002" r="0.6649999999999999" fill="#fff" opacity=".85"/><circle cx="8.5" cy="2.5" r="1.9" fill="#f00000"/><circle cx="7.93" cy="1.9300000000000002" r="0.6649999999999999" fill="#fff" opacity=".85"/><circle cx="2" cy="6.5" r="1.8" fill="#1070f0"/><circle cx="1.46" cy="5.96" r="0.63" fill="#fff" opacity=".85"/><circle cx="12.5" cy="9.5" r="1.8" fill="#1070f0"/><circle cx="11.96" cy="8.96" r="0.63" fill="#fff" opacity=".85"/><circle cx="9.5" cy="13" r="1.9" fill="#f00000"/><circle cx="8.93" cy="12.43" r="0.6649999999999999" fill="#fff" opacity=".85"/></svg>
<!-- caption buttons -->
<div class="cb" style="left:784px;background:linear-gradient(180deg,#c3d6ec 0,#c0d3ea 48%,#a9c1de 52%,#b4cae4 100%)"></div>
<div class="cb" style="left:818px;background:linear-gradient(180deg,#c3d6ec 0,#c0d3ea 48%,#a9c1de 52%,#b4cae4 100%)"></div>
<div class="cb" style="left:852px;border-color:#5a1419;background:linear-gradient(180deg,#e8a090 0,#d98473 48%,#c2432b 52%,#cc5a3e 100%)"></div>
<svg style="left:784px;top:131px" width="100" height="18" viewBox="0 0 100 18">
<rect x="10.5" y="10.5" width="10" height="3" rx="1" fill="#f4f4f4" stroke="#56607a" stroke-width="1"/>
<rect x="45" y="4.5" width="9" height="7" rx="1" fill="#f4f4f4" stroke="#56607a" stroke-width="1"/>
<rect x="47.5" y="7" width="4" height="2" fill="#a9c1de" stroke="#56607a" stroke-width=".8"/>
<path d="M79 5l3 0 2 2.5 2-2.5 3 0-3.5 4 3.5 4-3 0-2-2.5-2 2.5-3 0 3.5-4z" fill="#f4f4f4" stroke="#56404a" stroke-width=".9"/>
</svg>

<!-- molecule -->
<svg style="left:203px;top:154px" width="681" height="424" viewBox="203 154 681 424">
<defs>
<radialGradient id="gc" cx=".5625" cy=".451" r=".62"><stop offset="0" stop-color="#fff"/><stop offset=".045" stop-color="#e4e4e4"/><stop offset=".11" stop-color="#969696"/><stop offset=".18" stop-color="#7a7a7a"/><stop offset=".4" stop-color="#6c6c6c"/><stop offset=".68" stop-color="#505050"/><stop offset=".85" stop-color="#383838"/><stop offset=".95" stop-color="#202020"/><stop offset="1" stop-color="#101010"/></radialGradient>
<radialGradient id="go" cx=".5625" cy=".451" r=".62"><stop offset="0" stop-color="#ee9090"/><stop offset=".045" stop-color="#ea6868"/><stop offset=".11" stop-color="#e81c1c"/><stop offset=".18" stop-color="#e40000"/><stop offset=".4" stop-color="#d40000"/><stop offset=".68" stop-color="#a60000"/><stop offset=".85" stop-color="#7a0000"/><stop offset=".95" stop-color="#4a0000"/><stop offset="1" stop-color="#2c0000"/></radialGradient>
<linearGradient id="gb" x1="0" y1="0" x2="0" y2="1"><stop offset="0" stop-color="#4c4c4c"/><stop offset=".38" stop-color="#7e7e7e"/><stop offset=".5" stop-color="#747474"/><stop offset="1" stop-color="#343434"/></linearGradient>
<linearGradient id="gr" x1="0" y1="0" x2="0" y2="1"><stop offset="0" stop-color="#980000"/><stop offset=".38" stop-color="#ea0000"/><stop offset=".5" stop-color="#da0000"/><stop offset="1" stop-color="#6c0000"/></linearGradient>
</defs>
<g transform="translate(433.2,401.7) rotate(-17.1)"><rect x="0" y="-14.5" width="118" height="29" fill="url(#gb)"/></g>
<g transform="translate(545.4,367.1) rotate(-18.96)"><rect x="0" y="-14.5" width="58.5" height="29" fill="url(#gb)"/><rect x="58" y="-14.5" width="40" height="29" fill="url(#gr)"/></g>
<circle cx="433.2" cy="401.7" r="29.6" fill="url(#gc)"/>
<circle cx="545.4" cy="367.1" r="29.5" fill="url(#gc)"/>
<circle cx="656" cy="329.1" r="29.6" fill="url(#go)"/>
</svg>

<!-- axes -->
<svg style="left:830px;top:495px" width="60" height="60" viewBox="830 495 60 60">
<path d="M840 503l3.5 4.5 3.5-4.5M843.5 507.5v4.5" fill="none" stroke="#00d800" stroke-width="1.1"/>
<path d="M843.5 541v-14" stroke="#00e000" stroke-width="1.6"/><path d="M844.7 540v-11" stroke="#e8ffe8" stroke-width=".8"/>
<path d="M843.5 520l-3 9h6z" fill="#00e000"/>
<path d="M846 543h12" stroke="#f0f0f0" stroke-width="1.6"/>
<path d="M867 543l-10-3v6z" fill="#e8e8e8"/>
<circle cx="843.5" cy="543" r="3" fill="#800080" stroke="#e8e8e8" stroke-width="1"/>
<path d="M840 534.5h6.5l-6 7h5" fill="none" stroke="#ff20e0" stroke-width="1.1"/>
<path d="M872 534.5l7 8M879 534.5l-7 8" fill="none" stroke="#f0f0f0" stroke-width="1.1"/>
</svg>
</div>

<!-- bottom jobs panel -->
<div id="jobs">
<div class="a" style="left:181px;top:663px;width:17px;height:114px;background:#bfcddb"></div>
<svg style="left:186px;top:654px" width="7" height="6" viewBox="0 0 7 6"><path d="M.5 .3l6 5.4M6.5 .3l-6 5.4" stroke="#000" stroke-width="1.6" fill="none"/></svg>
<div class="t" style="left:183px;top:770px;transform:rotate(-90deg);transform-origin:0 0;letter-spacing:-.7px">Jobs</div>
<div class="a" style="left:202px;top:684px;width:34px;height:1px;background:#a0a0a0"></div>
<div class="a" style="left:240px;top:651px;width:828px;height:126px;background:#fff;border-top:1px solid #a0a0a0;border-left:1px solid #a0a0a0;border-right:1px solid #fff;border-bottom:1px solid #fff"></div>
<div class="a" style="left:241px;top:652px;width:826px;height:124px;background:#fff;border-top:1px solid #696969;border-left:1px solid #696969;border-right:1px solid #e3e3e3;border-bottom:1px solid #e3e3e3"></div>
<div class="hd" style="left:242px;top:653px;width:75px;height:18px"><span>Description</span></div>
<div class="hd" style="left:317px;top:653px;width:75px;height:18px"><span style="letter-spacing:-0.2px">Job Id</span></div>
<div class="hd" style="left:392px;top:653px;width:75px;height:18px"><span style="letter-spacing:-0.35px">Gateway</span></div>
<div class="hd" style="left:467px;top:653px;width:75px;height:18px"><span style="letter-spacing:-0.3px">Server</span></div>
<div class="hd" style="left:542px;top:653px;width:75px;height:18px"><span style="letter-spacing:-0.3px">Status</span></div>
<div class="hd" style="left:617px;top:653px;width:75px;height:18px"><span style="letter-spacing:-0.4px">Progress</span></div>
<div class="hd" style="left:692px;top:653px;width:75px;height:18px"><span style="letter-spacing:-0.25px">Start Time</span></div>
<div class="hd" style="left:767px;top:653px;width:75px;height:18px"><span style="letter-spacing:-0.4px">Results Fo...</span></div>
<div class="hd" style="left:842px;top:653px;width:224px;height:18px"></div>
<svg style="left:203px;top:650px" width="17" height="5" viewBox="0 0 17 5"><path d="M0 4.5h17" stroke="#000" stroke-width="1"/><path d="M0 1h17" stroke="#2040e0" stroke-width="1.5" stroke-dasharray="3 2"/><path d="M.5 1.5v3M16.5 1.5v3" stroke="#606060"/></svg>
<svg style="left:204px;top:662px" width="14" height="17" viewBox="0 0 14 17"><path d="M.5 .5h8l4 4v11h-12z" fill="#ffffdc" stroke="#101010" stroke-width=".8"/><path d="M8.5 .5v4h4" fill="#fff" stroke="#101010" stroke-width=".8"/><path d="M13 5v11.2h-12" fill="none" stroke="#000" stroke-width=".8"/><path d="M9.5 8q-1-2.5-3.5-2t-2.5 3" fill="none" stroke="#009000" stroke-width="1.1"/><path d="M7.5 4l3 1.5-1.5 3z" fill="#008000"/><path d="M3.5 10.5q1 2.5 3.5 2t2.5-3" fill="none" stroke="#009000" stroke-width="1.1"/><path d="M5.5 14.5l-3-1.5 1.5-3z" fill="#008000"/></svg>
<svg style="left:203px;top:693px" width="16" height="15" viewBox="0 0 16 15"><g transform="translate(1,1)" stroke="#fff" fill="none"><path d="M.5 5.5h10.5v9h-10.5zM2 3.5l4-3 5 3v2M2.5 8h3M2.5 10h3M2.5 12h6M7 8h2.5M12 2.5h3.5M15.5 2.5v3"/></g><g stroke="#a0a0a0" fill="none"><path d="M.5 5.5h10.5v9h-10.5zM2 3.5l4-3 5 3v2M2.5 8h3M2.5 10h3M2.5 12h6M7 8h2.5M12 2.5h3.5M15.5 2.5v3"/></g></svg>
<svg style="left:205px;top:715px" width="13" height="15" viewBox="0 0 13 15"><g transform="translate(1,1)" stroke="#fff" fill="none"><path d="M1.5 2.5h10q1 0 1 1v10q0 1-1 1h-10q-1 0-1-1v-10q0-1 1-1zM4 2.5v-2h5v2M.5 8h12M2.5 5h8M2.5 11.5h8"/><circle cx="6.5" cy="8" r="2"/></g><g stroke="#a0a0a0" fill="none"><path d="M1.5 2.5h10q1 0 1 1v10q0 1-1 1h-10q-1 0-1-1v-10q0-1 1-1zM4 2.5v-2h5v2M.5 8h12M2.5 5h8M2.5 11.5h8"/><circle cx="6.5" cy="8" r="2"/></g></svg>
<svg style="left:204px;top:737px" width="14" height="15" viewBox="0 0 14 15"><g transform="translate(1,1)" stroke="#fff" fill="none"><path d="M4.5 8v-5.5q0-1 1-1t1 1v-1q0-1 1-1t1 1v1q0-1 1-1t1 1v1.5q0-1 1-1t1 1v6.5q0 4-3 5.5h-4.5q-1.5-1-3-4l-2-3.5q1-1.5 2.5 0z"/></g><g stroke="#a0a0a0" fill="none"><path d="M4.5 8v-5.5q0-1 1-1t1 1v-1q0-1 1-1t1 1v1q0-1 1-1t1 1v1.5q0-1 1-1t1 1v6.5q0 4-3 5.5h-4.5q-1.5-1-3-4l-2-3.5q1-1.5 2.5 0z"/></g></svg>
<svg style="left:203px;top:758px" width="16" height="16" viewBox="0 0 16 16"><g transform="translate(1,1)" stroke="#fff" fill="none"><path d="M2.5 .5h13v11.5h-9M2.5 .5v9M5 9l8-6.5M5 3.5h3M6 5.5h3M10 8h3"/><path d="M4.5 13h1"/></g><g stroke="#a0a0a0" fill="none"><path d="M2.5 .5h13v11.5h-9M2.5 .5v9M5 9l8-6.5M5 3.5h3M6 5.5h3M10 8h3"/><path d="M4.5 13h1"/></g><circle cx="2.5" cy="13.5" r="1.9" fill="none" stroke="#787878" stroke-width="1.1"/><circle cx="7.5" cy="13.5" r="1.9" fill="none" stroke="#787878" stroke-width="1.1"/></svg>
</div>

<!-- status bar -->
<div id="status">
<div class="t" style="left:3.5px;top:781px;letter-spacing:-.75px">Ready</div>
<div class="a" style="left:819px;top:779px;width:134px;height:20px;border-top:1px solid #a0a0a0;border-left:1px solid #a0a0a0;border-right:1px solid #fff"></div>
<div class="a" style="left:955px;top:779px;width:28px;height:20px;border-top:1px solid #a0a0a0;border-left:1px solid #a0a0a0;border-right:1px solid #fff"></div>
<div class="a" style="left:985px;top:779px;width:34px;height:20px;border-top:1px solid #a0a0a0;border-left:1px solid #a0a0a0;border-right:1px solid #fff"></div>
<div class="a" style="left:1021px;top:779px;width:32px;height:20px;border-top:1px solid #a0a0a0;border-left:1px solid #a0a0a0;border-right:1px solid #fff"></div>
<div class="t" style="left:988px;top:781px;letter-spacing:-.2px">NUM</div>
<svg style="left:1058px;top:783px" width="13" height="13" viewBox="0 0 13 13"><path d="M12 1l-11 11M12 5l-7 7M12 9l-3 3" stroke="#a0a0a0" stroke-width="1"/><path d="M13 1l-12 12M13 5l-8 8M13 9l-4 4" stroke="#fff" stroke-width="1"/></svg>
</div>
<!-- bottom/right frame overdraw -->
<div class="a" style="left:0;top:796px;width:1073px;height:1px;background:#0b79d2"></div>
<div class="a" style="left:1072px;top:0;width:1px;height:797px;background:#0b79d2"></div>
</body>
</html>
